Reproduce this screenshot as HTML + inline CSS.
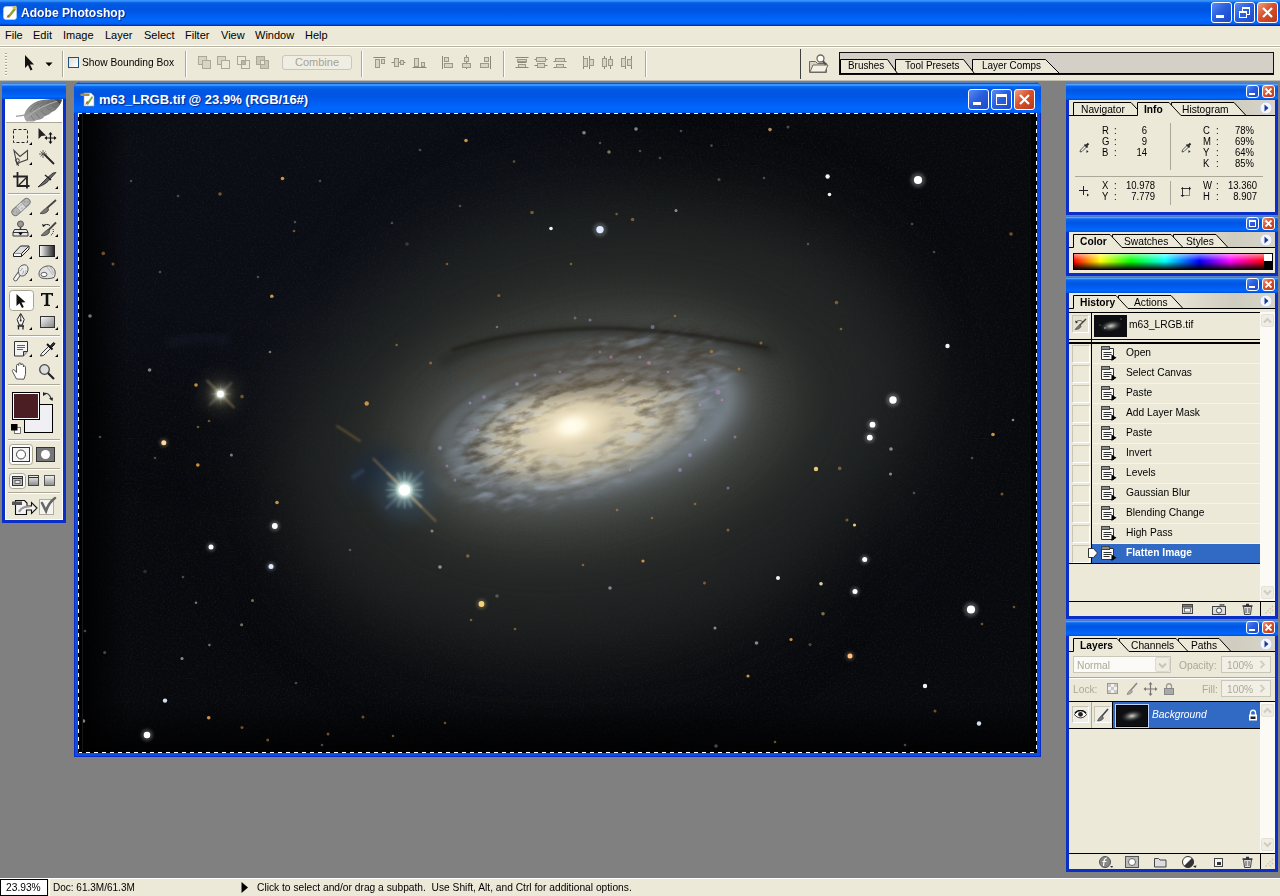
<!DOCTYPE html>
<html><head><meta charset="utf-8">
<style>
*{box-sizing:border-box;margin:0;padding:0}
html,body{width:1280px;height:896px;overflow:hidden;background:#808080;font-family:"Liberation Sans",sans-serif;font-size:11px;color:#000}
.abs{position:absolute}
#titlebar{left:0;top:0;width:1280px;height:26px;background:linear-gradient(#3c96ff 0%,#2f8afa 5%,#0a64e2 10%,#0057e2 18%,#0054e0 40%,#005ef2 58%,#0068ff 78%,#0062f4 91%,#0046d0 95%,#002fb0 98%)}
#titlebar .t{left:21px;top:5px;font-weight:bold;font-size:13px;color:#fff;text-shadow:1px 1px 1px #0a2a80;transform:scaleX(.93);transform-origin:0 50%;white-space:nowrap}
#menubar{left:0;top:26px;width:1280px;height:20px;background:#ece9d8;border-bottom:1px solid #fff}
#menubar span{position:absolute;top:3px;font-size:11px}
#optbar{left:0;top:46px;width:1280px;height:35px;background:#ece9d8;border-top:1px solid #b4b1a2;box-shadow:inset 0 1px 0 #fff;border-bottom:1px solid #c0bdae}
#statusbar{left:0;top:878px;width:1280px;height:18px;background:#ece9d8;border-top:1px solid #fff}
.xpwin{background:#0831d9;border-radius:5px 5px 0 0}
.xptitle{background:linear-gradient(#0a5fe0 0%,#3a8bf5 8%,#1169f2 18%,#0459e8 35%,#0355e2 60%,#0459ea 82%,#0b46c4 100%);border-radius:5px 5px 0 0}
.beige{background:#ece9d8}
.btn{position:absolute;border:1px solid #fff;border-radius:3px;background:linear-gradient(135deg,#5b8cf0 0%,#2a5fe0 45%,#1c48c8 100%)}
.btn.x{background:linear-gradient(135deg,#f0a080 0%,#d8502c 45%,#b83a18 100%)}
.vsep{top:4px;width:2px;height:26px;border-left:1px solid #aca899;border-right:1px solid #fff}
.wtab{top:12px;transform:scaleX(.9);transform-origin:0 50%;font-size:11px;white-space:nowrap}
.pt{font-size:11px;white-space:nowrap;transform:scaleX(.93);transform-origin:0 50%}
.pi{font-size:10px;white-space:nowrap;transform:scaleX(.95);transform-origin:0 50%}
.pi.r{text-align:right;transform-origin:100% 50%}
</style></head><body>
<!-- TITLE BAR -->
<div id="titlebar" class="abs">
<svg class="abs" style="left:3px;top:5px" width="15" height="15" viewBox="0 0 15 15"><rect x=".5" y="1.500" width="13" height="13" rx="2.500" fill="#fff" stroke="#c8d4f0" stroke-width=".6"/><path d="M4 12l7-9 2 1.500-7 8.500z" fill="#8aa030"/><path d="M3.500 13l1.500-3.500 1.500 1.200z" fill="#c05020"/><path d="M9 2.500l4-2 1 2.500-3 1.500z" fill="#e8c030"/></svg>
<div class="abs t">Adobe Photoshop</div>
<div class="btn" style="left:1211px;top:2px;width:21px;height:21px"><div class="abs" style="left:4px;top:12px;width:8px;height:3px;background:#fff"></div></div>
<div class="btn" style="left:1234px;top:2px;width:21px;height:21px"><div class="abs" style="left:7px;top:4px;width:8px;height:8px;border:1px solid #fff;border-top-width:2px"></div><div class="abs" style="left:4px;top:8px;width:8px;height:7px;border:1px solid #fff;border-top-width:2px;background:#2a5fe0"></div></div>
<div class="btn x" style="left:1257px;top:2px;width:21px;height:21px"><svg class="abs" style="left:3px;top:3px" width="13" height="13"><path d="M2 2l9 9M11 2l-9 9" stroke="#fff" stroke-width="2.200"/></svg></div>
</div>
<!-- MENU -->
<div id="menubar" class="abs">
<span style="left:5px">File</span><span style="left:33px">Edit</span><span style="left:63px">Image</span><span style="left:105px">Layer</span><span style="left:144px">Select</span><span style="left:185px">Filter</span><span style="left:221px">View</span><span style="left:255px">Window</span><span style="left:305px">Help</span>
</div>
<div id="optbar" class="abs">
<!-- gripper -->
<div class="abs" style="left:5px;top:6px;width:2px;height:24px;background:repeating-linear-gradient(#a8a593 0 1px,#fff 1px 2px,transparent 2px 3px)"></div>
<svg class="abs" style="left:22px;top:7px" width="14" height="18" viewBox="0 0 14 18"><path d="M3 1 L3 14 L6 11 L8.5 16.5 L10.5 15.5 L8 10.5 L12 10.5 Z" fill="#111"/></svg>
<svg class="abs" style="left:45px;top:15px" width="8" height="5"><path d="M0.5 0.5h7l-3.5 3.7z" fill="#000"/></svg>
<div class="abs vsep" style="left:62px"></div>
<div class="abs" style="left:68px;top:10px;width:11px;height:11px;border:1px solid #1c5180;background:linear-gradient(135deg,#dcdcd7,#fff)"></div>
<div class="abs pt" style="left:82px;top:9px" id="sbb">Show Bounding Box</div>
<div class="abs vsep" style="left:185px"></div>
<!-- 4 shape-area icons -->
<svg class="abs" style="left:197px;top:8px" width="74" height="16" viewBox="0 0 74 16" fill="none" stroke="#aca899">
<g><rect x="1.5" y="1.5" width="8" height="8" fill="#d8d5c6"/><rect x="5.5" y="5.5" width="8" height="8" fill="#d8d5c6"/></g>
<g transform="translate(19,0)"><rect x="1.5" y="1.5" width="8" height="8" fill="#d8d5c6"/><rect x="5.5" y="5.5" width="8" height="8" fill="#ece9d8"/></g>
<g transform="translate(39,0)"><rect x="1.5" y="1.5" width="8" height="8"/><rect x="5.5" y="5.5" width="8" height="8"/><rect x="5.5" y="5.5" width="4" height="4" fill="#b8b5a6"/></g>
<g transform="translate(58,0)"><rect x="1.5" y="1.5" width="8" height="8" fill="#c9c6b7"/><rect x="5.5" y="5.5" width="8" height="8" fill="#c9c6b7"/><rect x="5.5" y="5.5" width="4" height="4" fill="#ece9d8"/></g>
</svg>
<div class="abs" style="left:282px;top:8px;width:70px;height:15px;border:1px solid #c9c7ba;border-radius:3px;background:#f0eee2;color:#a5a294;font-size:11px;text-align:center;line-height:13px">Combine</div>
<div class="abs vsep" style="left:361px"></div>
<!-- align icons -->
<svg class="abs" style="left:372px;top:7px" width="270" height="18" viewBox="0 0 270 18" fill="#d8d5c6" stroke="#9c998a">
<g id="al1"><path d="M1.5 3.5h12" stroke="#8a8778"/><rect x="3.5" y="5.5" width="4" height="8"/><rect x="9.500" y="5.500" width="3" height="4"/></g>
<g transform="translate(19,0)"><path d="M0.5 8.500h14" stroke="#8a8778"/><rect x="3.500" y="4.500" width="4" height="8"/><rect x="9.500" y="6.500" width="3" height="4"/></g>
<g transform="translate(39,0)"><path d="M1.5 13.500h14" stroke="#8a8778"/><rect x="3.500" y="4.500" width="4" height="8"/><rect x="10.500" y="8.500" width="3" height="4"/></g>
<g transform="translate(68,0)"><path d="M2.500 2v13" stroke="#8a8778"/><rect x="4.500" y="3.500" width="4" height="4"/><rect x="4.500" y="9.500" width="8" height="4"/></g>
<g transform="translate(87,0)"><path d="M7.500 1v14" stroke="#8a8778"/><rect x="5.500" y="3.500" width="4" height="4"/><rect x="3.500" y="9.500" width="8" height="4"/></g>
<g transform="translate(106,0)"><path d="M12.500 2v13" stroke="#8a8778"/><rect x="6.500" y="3.500" width="4" height="4"/><rect x="2.500" y="9.500" width="8" height="4"/></g>
<g transform="translate(142,0)"><path d="M1.500 3.500h13M3.500 8.500h9" stroke="#8a8778"/><rect x="3.500" y="5.500" width="9" height="2"/><rect x="4.500" y="10.500" width="7" height="3"/><path d="M1.500 13.500h13" stroke="#8a8778"/></g>
<g transform="translate(161,0)"><path d="M1.500 5.500h13M1.500 11.500h13" stroke="#8a8778"/><rect x="3.500" y="3.500" width="9" height="4"/><rect x="4.500" y="9.500" width="7" height="4"/></g>
<g transform="translate(180,0)"><path d="M1.500 7.500h13M1.500 13.500h13" stroke="#8a8778"/><rect x="3.500" y="4.500" width="9" height="3"/><rect x="4.500" y="10.500" width="7" height="3"/></g>
<g transform="translate(209,0)"><path d="M2.500 2v13M8.500 2v13" stroke="#8a8778"/><rect x="2.500" y="4.500" width="4" height="8"/><rect x="8.500" y="5.500" width="4" height="6"/></g>
<g transform="translate(228,0)"><path d="M4.500 2v13M10.500 2v13" stroke="#8a8778"/><rect x="2.500" y="4.500" width="4" height="8"/><rect x="8.500" y="5.500" width="4" height="6"/></g>
<g transform="translate(247,0)"><path d="M6.500 2v13M12.500 2v13" stroke="#8a8778"/><rect x="2.500" y="4.500" width="4" height="8"/><rect x="8.500" y="5.500" width="4" height="6"/></g>
</svg>
<div class="abs vsep" style="left:503px"></div>
<div class="abs vsep" style="left:645px"></div>
<div class="abs" style="left:800px;top:2px;width:1px;height:30px;background:#404040"></div>
<!-- file browser icon -->
<svg class="abs" style="left:807px;top:6px" width="23" height="22" viewBox="0 0 23 22"><path d="M2.500 8.500h6l2 2h9v9h-17z" fill="#d6d3c4" stroke="#6e6b5e"/><path d="M3 19l3-7h15l-3 7z" fill="#f4f2e8" stroke="#6e6b5e"/><circle cx="13.500" cy="5.500" r="3.500" fill="#fff" stroke="#6e6b5e" stroke-width="1.300"/><path d="M15.800 8l3 3.500" stroke="#55524a" stroke-width="2"/></svg>
<!-- palette well -->
<div class="abs" style="left:839px;top:5px;width:435px;height:23px;background:#d4d0c8;border:1px solid #111"></div>
<svg class="abs" style="left:839px;top:6px" width="436" height="21" viewBox="0 0 436 21">
<path d="M133.500 20.500V6.500h73l14 14z" fill="#ece9d8" stroke="#000"/>
<path d="M56.500 20.500V6.500h68l11 14z" fill="#ece9d8" stroke="#000"/>
<path d="M1.500 20.500V6.500h47l10 14z" fill="#ece9d8" stroke="#000"/>
<path d="M1 20.500h434" stroke="#000"/>
</svg>
<div class="abs wtab" style="left:848px">Brushes</div>
<div class="abs wtab" style="left:905px">Tool Presets</div>
<div class="abs wtab" style="left:982px">Layer Comps</div>
</div>
<div id="statusbar" class="abs">
<div class="abs" style="left:0;top:0;width:48px;height:17px;border:1px solid #000;background:#fff"></div><div class="abs pt" style="left:6px;top:2px">23.93%</div>
<div class="abs" style="left:49px;top:0;width:1px;height:17px;background:#fff"></div>
<div class="abs pt" style="left:53px;top:2px;transform:scaleX(.91)" id="doc">Doc: 61.3M/61.3M</div>
<svg class="abs" style="left:241px;top:3px" width="8" height="11"><path d="M0.500 0v11l6.500-5.500z" fill="#000"/></svg>
<div class="abs pt" style="left:257px;top:2px;white-space:pre" id="hint">Click to select and/or drag a subpath.  Use Shift, Alt, and Ctrl for additional options.</div>
</div>
<!-- TOOLBOX -->
<div id="toolbox" class="abs" style="left:2px;top:82px;width:64px;height:441px;background:#0a2fc8"></div>
<div class="abs" style="left:2px;top:82px;width:64px;height:17px;background:linear-gradient(#6486b8 0%,#4a78c4 10%,#5aa8ff 12%,#4a9cff 18%,#0a66f0 24%,#0056e2 45%,#005cf0 65%,#0068ff 86%,#0050d8 100%)"></div>
<div class="abs" style="left:5px;top:99px;width:58px;height:23px;background:#fff"></div>
<div class="abs" style="left:5px;top:122px;width:58px;height:398px;background:#ece9d8;border-left:1px solid #fff;border-right:1px solid #fff;border-bottom:1px solid #fff"></div>
<svg class="abs" style="left:2px;top:82px" width="64" height="441" viewBox="2 82 64 441">
<defs>
<linearGradient id="gH" x1="0" x2="1"><stop offset="0" stop-color="#fff"/><stop offset="1" stop-color="#222"/></linearGradient>
<linearGradient id="gV" x1="0" x2="0" y1="0" y2="1"><stop offset="0" stop-color="#f4f4f4"/><stop offset="1" stop-color="#8a8a8a"/></linearGradient>
<linearGradient id="gD" x1="0" x2="1" y1="0" y2="1"><stop offset="0" stop-color="#fafafa"/><stop offset="1" stop-color="#808080"/></linearGradient>
<filter id="tb1" x="-30%" y="-30%" width="160%" height="160%"><feGaussianBlur stdDeviation="0.500"/></filter>
</defs>
<!-- feather -->
<linearGradient id="fg" x1="0" y1="1" x2="1" y2="0"><stop offset="0" stop-color="#a4a4a4"/><stop offset=".6" stop-color="#858585"/><stop offset="1" stop-color="#5c5c5c"/></linearGradient>
<g filter="url(#tb1)"><path d="M16 116.300C19 116 22 115.800 25 114.800" stroke="#9a9a9a" stroke-width="1.300" fill="none"/>
<path d="M24 116C25 110 30 104 38 101C46 99 56 98.500 62 99.500C61.500 103 59 107 55 110.500L51.500 112.200C50 114 47 115.500 44.500 116.300L43 118C41 119.500 38.500 120 36.500 120L35 121C32.500 121.700 30.500 121.700 29 121.200L27.500 121.700C25.500 121 24.500 119 24 116z" fill="url(#fg)"/>
<path d="M26 117.500C34 111 46 104 60 100.500" stroke="#b8b8b8" stroke-width=".9" fill="none"/>
<path d="M30 112c2-4 5-7 9-9M34 110c3-4 6-6 10-8M40 107c3-3 6-4 9-5M46 104c3-2 5-2.500 8-3M31 116l3 4M36 113.500l4 5M41 111l5 4M47 108l5 3M52 105.500l4 2.500" stroke="#666" stroke-width=".8" fill="none" opacity=".8"/>
<path d="M54.500 99l7.500 .5-2 4.500z" fill="#4a4a4a"/></g>
<path d="M6 122.500h56" stroke="#aca899"/>
<!-- separators -->
<g stroke="#aca899"><path d="M8 193.500h52M8 286.500h52M8 335.500h52M8 384.500h52M8 439.500h52M8 468.500h52M8 492.500h52"/></g>
<g stroke="#fff"><path d="M8 194.500h52M8 287.500h52M8 336.500h52M8 385.500h52M8 440.500h52M8 469.500h52M8 493.500h52"/></g>
<!-- flyout triangles -->
<g fill="#000"><path d="M32 142v3h-3zM32 162v3h-3zM58 186v3h-3zM32 212v3h-3zM58 212v3h-3zM32 234v3h-3zM58 234v3h-3zM32 256v3h-3zM58 256v3h-3zM32 278v3h-3zM58 278v3h-3zM32 307v3h-3zM58 305v3h-3zM32 327v3h-3zM58 327v3h-3zM32 354v3h-3zM58 354v3h-3z"/></g>
<!-- marquee -->
<rect x="13.500" y="129.500" width="14" height="13" fill="none" stroke="#222" stroke-dasharray="3 2"/>
<!-- move -->
<path d="M38.500 128v11l3-3 4.500-.5z" fill="#222"/><path d="M50.500 133v10M45.500 138h10" stroke="#111" stroke-width="1.200"/><path d="M50.500 132l2 2.500h-4zM50.500 144l2-2.500h-4zM44.500 138l2.500-2v4zM56.500 138l-2.500-2v4z" fill="#111"/>
<!-- polygon lasso -->
<path d="M14 150.500l6 6 7.500-6v9l-8 3-2.500 2z" fill="none" stroke="#444" stroke-width="1.100"/><circle cx="17.500" cy="160.500" r="1.800" fill="none" stroke="#333"/><path d="M17 162l1.500 4" stroke="#333"/>
<!-- magic wand -->
<path d="M44 154l10 10" stroke="#222" stroke-width="1.800"/><path d="M43 150v8M39 154h8M40.500 151.500l5 5M45.500 151.500l-5 5" stroke="#555" stroke-width=".9"/>
<!-- crop -->
<path d="M17.500 172v14h12M13 176.500h14v12" fill="none" stroke="#222" stroke-width="1.800"/><path d="M18 186l9-9" stroke="#222" stroke-width="1.200"/>
<!-- slice -->
<path d="M38 187c6-2 10-5 12-8l6-6.500-3 .5-6 5c-3 3-6 6-9 9z" fill="#666" stroke="#222" stroke-width=".8"/><path d="M45 175l6 5" stroke="#222" stroke-width="1.500"/>
<!-- healing brush -->
<g transform="rotate(-42 21 207)"><rect x="10" y="203.500" width="22" height="7" rx="3.500" fill="#b5b5b5" stroke="#777"/><rect x="17.500" y="203.500" width="7" height="7" fill="#d8d8d8" stroke="#888" stroke-width=".6"/><g fill="#777"><circle cx="12.500" cy="205.500" r=".5"/><circle cx="14.500" cy="208" r=".5"/><circle cx="27.500" cy="205.500" r=".5"/><circle cx="29.500" cy="208" r=".5"/><circle cx="19.500" cy="205.500" r=".5"/><circle cx="22.500" cy="205.500" r=".5"/><circle cx="21" cy="208.500" r=".5"/></g></g>
<!-- brush -->
<path d="M56 200l-9 8" stroke="#444" stroke-width="1.800"/><path d="M47 207.500c-2 1-4 3-7 6 3 .5 6 0 8-2.500 1-1.500 .5-3-1-3.500z" fill="#777" stroke="#333" stroke-width=".7"/>
<!-- stamp -->
<circle cx="20.500" cy="224" r="3" fill="#9a9a9a" stroke="#555"/><path d="M20.500 227v3" stroke="#444" stroke-width="1.500"/><path d="M14.500 229.500h12l1.500 3v3.500h-15v-3.500z" fill="#e8e8e8" stroke="#333"/><path d="M13 232.500h15" stroke="#333"/><path d="M18 232.500h5l-2.500 3z" fill="#111"/>
<!-- history brush -->
<path d="M56 222.500l-8 8" stroke="#444" stroke-width="1.800"/><path d="M48 229.500c-2 1-4 3-7 6 3 .5 6 0 8-2.500 1-1.500 .5-3-1-3.500z" fill="#777" stroke="#333" stroke-width=".7"/><path d="M43 226c2-2 5-2 7-.5" fill="none" stroke="#222"/><path d="M42 224l1 3 2.500-1.500z" fill="#111"/><path d="M53 229c1 2.500 0 5-2.500 6.500" fill="none" stroke="#222" stroke-dasharray="1 1"/>
<!-- eraser -->
<path d="M13.500 253.500l7-7.500h8.500l-7.500 7.500z" fill="#ddd" stroke="#222"/><path d="M13.500 253.500v3h8v-3M21.500 256.500l7.500-7.500v-3" fill="#f8f8f8" stroke="#222"/>
<!-- gradient -->
<rect x="39.500" y="245.500" width="15" height="11" fill="url(#gH)" stroke="#222"/>
<!-- smudge -->
<path d="M15.500 279L20.500 272" stroke="#555" stroke-width="4.600" stroke-linecap="round"/><path d="M15.500 279L20.500 272" stroke="#f6f6f6" stroke-width="2.800" stroke-linecap="round"/>
<path d="M18.500 271.500c-.5-3 1.500-5.500 4.500-6.500 2.500-.8 4.800 .5 5 3 .3 3-1 6-3.500 7.500-2 1-4.500 .5-5.500-1z" fill="#ececec" stroke="#555"/>
<path d="M22 274.500c1-1 1.500-2.300 1.500-3.800M24.500 274.500c1-1.500 1.500-2.800 1.500-4.200M20 271c1-.5 2-1.800 2.500-3" stroke="#8a8a8a" stroke-width=".8" fill="none"/>
<!-- sponge -->
<path d="M39 274c0-4 3-7 8-8 4-.5 7 1.500 8 5 .5 3 0 5-1 6.500-4 1.500-9 1.500-12.500.5-1.500-.5-2.500-2-2.500-4z" fill="#e0e0e0" stroke="#555"/><ellipse cx="44" cy="274.500" rx="3" ry="2.200" fill="#f8f8f8" stroke="#555" stroke-width=".9"/><path d="M47 267l6 8M50 266.500l4 7" stroke="#aaa" stroke-width=".8"/>
<!-- selected path-select tool -->
<rect x="9.500" y="290.500" width="24" height="20" rx="3" fill="#fff" stroke="#a8a593"/><path d="M16.500 294v12l3-2.800 2.500 4.800 1.800-1-2.300-4.500 4-.3z" fill="#111"/>
<!-- T -->
<path d="M41 293h12v3h-1l-.7-1.500h-3v10l1.700.5v1h-6v-1l1.700-.5v-10h-3l-.7 1.500h-1z" fill="#111"/>
<!-- pen -->
<path d="M20.700 313.500l-3.500 6 2 5.500h3l2-5.500z" fill="#f4f4f4" stroke="#222"/><path d="M20.700 314v6" stroke="#222" stroke-width=".8"/><circle cx="20.700" cy="320.500" r=".9" fill="#222"/><path d="M17.500 326h6.500M18.500 326v3.500M23 326v3.500" stroke="#222" stroke-width="1.300"/>
<!-- rect shape -->
<rect x="40.500" y="316.500" width="14" height="11" fill="url(#gD)" stroke="#333"/>
<!-- notes -->
<path d="M14.500 341.500h13v10l-4 4.500h-9z" fill="#f4f4f4" stroke="#333"/><path d="M23.500 356v-4.500h4" fill="#bbb" stroke="#333"/><path d="M17 345.500h8M17 347.500h8M17 349.500h6" stroke="#555" stroke-width=".9"/>
<!-- eyedropper -->
<path d="M40.500 356l1-2.500 7-7 2 2-7 7z" fill="#f0f0f0" stroke="#222" stroke-width=".9"/><path d="M47 344l5.500 5.500" stroke="#111" stroke-width="2"/><path d="M50 346.500l3-3.500c1-1 2.500 .5 1.500 1.500l-3 3z" fill="#333" stroke="#111"/>
<!-- hand -->
<path d="M16.500 379l-4-7.500c-.8-1.500 1-2.500 2-1.500l2 2.500v-7c0-1.500 2-1.500 2.200 0v-1.500c0-1.500 2.200-1.500 2.300 0v1c0-1.500 2.300-1.500 2.400 0v2c0-1.300 2.100-1.300 2.100 .2v7l-1.500 5z" fill="#fff" stroke="#444" stroke-width=".9"/>
<!-- zoom -->
<circle cx="44.500" cy="369.500" r="4.800" fill="#ddd" stroke="#444" stroke-width="1.300"/><path d="M48 373l6 6" stroke="#222" stroke-width="2.200"/>
<!-- colors -->
<rect x="24.500" y="404.500" width="28" height="28" fill="#f0f0f4" stroke="#000"/>
<rect x="12.500" y="392.500" width="27" height="27" fill="#fff" stroke="#000"/><rect x="14" y="394" width="24" height="24" fill="#4a1e22"/>
<path d="M44 393.500c3-1 6 1 7 5" fill="none" stroke="#333" stroke-width="1.200"/><path d="M43 392l0 4 3.500-2zM52.500 401l-3.500-2.500 4-1z" fill="#222"/>
<rect x="14.500" y="427.500" width="6" height="6" fill="#fff" stroke="#555" stroke-width=".8"/><rect x="11" y="424" width="6.500" height="6.500" fill="#000"/>
<!-- quick mask -->
<rect x="9.500" y="444.500" width="23" height="20" rx="3" fill="#fff" stroke="#a8a593"/><rect x="12.500" y="447.500" width="17" height="14" fill="#f4f4f4" stroke="#333"/><circle cx="21" cy="454.500" r="4.500" fill="#fff" stroke="#444"/>
<rect x="36.500" y="447.500" width="18" height="14" fill="#777" stroke="#333"/><circle cx="45.500" cy="454.500" r="4.500" fill="#fff"/>
<!-- screen modes -->
<rect x="9.500" y="473.500" width="16" height="15" rx="3" fill="#f8f8f4" stroke="#a8a593"/><rect x="12.500" y="476.500" width="10" height="9" fill="#b8b8b8" stroke="#333"/><path d="M12.500 478.500h10" stroke="#333"/><rect x="15" y="480.500" width="5" height="3" fill="#e8e8e8" stroke="#444" stroke-width=".7"/>
<rect x="28.500" y="475.500" width="10" height="10" fill="url(#gV)" stroke="#444"/><path d="M28.500 477.500h10" stroke="#333"/>
<rect x="44.500" y="475.500" width="10" height="10" fill="url(#gV)" stroke="#555"/>
<!-- jump to -->
<path d="M15.500 500.500h9l2.500 2.500v3h4.500v-3.500l5.500 5.500-5.500 5.500v-3.500h-5v4.500h-11z" fill="#f4f4f4" stroke="#111" stroke-width="1.100"/><rect x="12" y="501.500" width="10" height="3.500" fill="#555"/><path d="M19 512c2-4 6-6 11-5.500" fill="none" stroke="#999" stroke-width="2"/>
<rect x="39.500" y="499.500" width="14" height="15" fill="#f4f4f0" stroke="#b0ada0"/><path d="M42 503l4 8c2-6 5-10 9-13" fill="none" stroke="#666" stroke-width="2.600" stroke-linecap="round"/>
</svg>

<!-- DOC WINDOW -->
<div id="docwin" class="abs" style="left:74px;top:82px;width:967px;height:675px;background:#0a4ce4;border-radius:7px 7px 0 0;overflow:hidden;box-shadow:inset 0 0 0 1px #0a2cc4">
<div class="abs" style="left:0;top:0;width:967px;height:31px;background:linear-gradient(#5a7cb8 0%,#5a7cb8 3%,#1a50b8 3.500%,#1a50b8 6%,#3c92ff 7%,#3c92ff 11.500%,#0a6cf0 14%,#0058e4 24%,#0054e0 42%,#005cf0 62%,#0068ff 86%,#0064f8 96%,#0050d8 100%)"></div>
<!-- doc icon -->
<svg class="abs" style="left:6px;top:9px" width="16" height="16" viewBox="0 0 16 16"><path d="M4 2h7l3 3v10H4z" fill="#fff" stroke="#a0a0a0" stroke-width=".6"/><path d="M0.500 2.500h9v2.500h-9z" fill="#a09048"/><path d="M6 13l6-8 1 1.500-5 7.500z" fill="#78b040"/><path d="M5 14l2-4 1.500 1z" fill="#d04020"/></svg>
<div class="abs" style="left:25px;top:10px;font-size:13px;font-weight:bold;color:#fff;white-space:nowrap;text-shadow:1px 1px 1px #0a2a80" id="doctitle">m63_LRGB.tif @ 23.9% (RGB/16#)</div>
<div class="btn" style="left:894px;top:7px;width:21px;height:21px"><div class="abs" style="left:4px;top:12px;width:8px;height:3px;background:#fff"></div></div>
<div class="btn" style="left:917px;top:7px;width:21px;height:21px"><div class="abs" style="left:4px;top:4px;width:11px;height:11px;border:1px solid #fff;border-top-width:3px"></div></div>
<div class="btn x" style="left:940px;top:7px;width:21px;height:21px"><svg class="abs" style="left:3px;top:3px" width="13" height="13"><path d="M2 2l9 9M11 2l-9 9" stroke="#fff" stroke-width="2.200"/></svg></div>
</div>
<svg class="abs" id="gal" style="left:78px;top:113px" width="959" height="640" viewBox="78 113 959 640">
<defs>
<filter id="b1" color-interpolation-filters="sRGB" x="-50%" y="-50%" width="200%" height="200%"><feGaussianBlur stdDeviation="0.6"/></filter>
<filter id="bs" color-interpolation-filters="sRGB" x="-50%" y="-50%" width="200%" height="200%"><feGaussianBlur stdDeviation="0.9"/></filter>
<filter id="b2" color-interpolation-filters="sRGB" x="-50%" y="-50%" width="200%" height="200%"><feGaussianBlur stdDeviation="1.5"/></filter>
<filter id="b4" color-interpolation-filters="sRGB" x="-50%" y="-50%" width="200%" height="200%"><feGaussianBlur stdDeviation="4"/></filter>
<filter id="b8" color-interpolation-filters="sRGB" x="-50%" y="-50%" width="200%" height="200%"><feGaussianBlur stdDeviation="9"/></filter>
<filter id="b20" color-interpolation-filters="sRGB" x="-50%" y="-50%" width="200%" height="200%"><feGaussianBlur stdDeviation="20"/></filter>
<filter id="b40" color-interpolation-filters="sRGB" x="-50%" y="-50%" width="200%" height="200%"><feGaussianBlur stdDeviation="45"/></filter>
<radialGradient id="core"><stop offset="0" stop-color="#fffbe8"/><stop offset=".2" stop-color="#fff4d8" stop-opacity=".95"/><stop offset=".55" stop-color="#f2e4c0" stop-opacity=".55"/><stop offset="1" stop-color="#e6d8b4" stop-opacity="0"/></radialGradient>
<filter id="mott" x="0" y="0" width="100%" height="100%" color-interpolation-filters="sRGB"><feTurbulence type="fractalNoise" baseFrequency="0.05 0.13" numOctaves="4" seed="11"/><feColorMatrix type="matrix" values="0 0 0 0 0.22  0 0 0 0 0.18  0 0 0 0 0.13  2.4 0 0 0 -1.05"/></filter>
<filter id="mottL" x="0" y="0" width="100%" height="100%" color-interpolation-filters="sRGB"><feTurbulence type="fractalNoise" baseFrequency="0.05 0.13" numOctaves="2" seed="29"/><feColorMatrix type="matrix" values="0 0 0 0 0.72  0 0 0 0 0.78  0 0 0 0 0.88  0 2.4 0 0 -1.15"/></filter>
<filter id="grain" x="0" y="0" width="100%" height="100%" color-interpolation-filters="sRGB"><feTurbulence type="fractalNoise" baseFrequency="0.6" numOctaves="2" seed="4"/><feColorMatrix type="matrix" values="0 0 0 0 0.16  0 0 0 0 0.17  0 0 0 0 0.19  0.9 0.5 0 0 -0.68"/></filter>
<mask id="dm"><g transform="rotate(-13 580 425)"><ellipse cx="592" cy="424" rx="150" ry="66" fill="#fff" filter="url(#b8)"/><ellipse cx="574" cy="427" rx="46" ry="24" fill="#000" filter="url(#b8)"/></g></mask>
<mask id="dmT"><g transform="rotate(-13 580 425)"><ellipse cx="596" cy="404" rx="150" ry="52" fill="#fff" filter="url(#b8)"/><ellipse cx="574" cy="430" rx="60" ry="30" fill="#000" filter="url(#b8)"/></g></mask>
<mask id="dm2"><g transform="rotate(-10 580 425)"><ellipse cx="592" cy="418" rx="175" ry="86" fill="#fff" filter="url(#b8)"/><ellipse cx="580" cy="430" rx="95" ry="42" fill="#000" filter="url(#b8)"/></g></mask>
<linearGradient id="vl" x1="0" x2="1"><stop offset="0" stop-color="#000" stop-opacity=".9"/><stop offset="1" stop-color="#000" stop-opacity="0"/></linearGradient><linearGradient id="vb" x1="0" x2="0" y1="1" y2="0"><stop offset="0" stop-color="#000" stop-opacity=".85"/><stop offset="1" stop-color="#000" stop-opacity="0"/></linearGradient>
<clipPath id="cp"><rect x="83" y="113" width="948" height="638"/></clipPath>
</defs>
<rect x="78" y="113" width="959" height="640" fill="#000"/>
<rect x="82" y="113" width="1" height="638" fill="#14161a"/>
<rect x="1029" y="113" width="1" height="638" fill="#1a1c14"/>
<g clip-path="url(#cp)">
<rect x="83" y="113" width="948" height="638" fill="#08090d"/>
<ellipse cx="300" cy="220" rx="330" ry="190" fill="#0b0d15" filter="url(#b40)"/>
<ellipse cx="640" cy="330" rx="230" ry="120" fill="#1c1f1c" filter="url(#b40)"/>
<ellipse cx="560" cy="540" rx="230" ry="110" fill="#1a1c1b" filter="url(#b40)"/>
<g transform="rotate(-10 580 425)">
<ellipse cx="600" cy="428" rx="330" ry="200" fill="#242726" filter="url(#b40)"/>
<ellipse cx="590" cy="424" rx="215" ry="128" fill="#393c37" filter="url(#b20)"/>
</g>
<rect x="83" y="113" width="948" height="638" filter="url(#grain)" opacity=".9"/>
<g transform="rotate(-13 580 425)">
<ellipse cx="590" cy="425" rx="166" ry="84" fill="#585c5c" filter="url(#b20)"/>
<ellipse cx="594" cy="427" rx="148" ry="64" fill="#747c82" filter="url(#b8)"/>
<ellipse cx="594" cy="427" rx="150" ry="66" fill="#6a7278" opacity=".5" filter="url(#b20)"/>
<ellipse cx="584" cy="428" rx="112" ry="50" fill="#a9a696" filter="url(#b8)"/>
<ellipse cx="578" cy="428" rx="84" ry="40" fill="#d2c8ac" filter="url(#b8)"/>
</g>
<g transform="rotate(-13 580 425)"><rect x="400" y="320" width="380" height="210" filter="url(#mottL)" mask="url(#dm)" opacity=".5"/></g>
<g transform="rotate(-13 580 425)"><rect x="400" y="320" width="380" height="210" filter="url(#mott)" mask="url(#dm)" opacity=".28"/></g>
<g transform="rotate(-13 580 425)"><rect x="400" y="320" width="380" height="210" filter="url(#mott)" mask="url(#dmT)" opacity=".5"/></g>
<ellipse cx="600" cy="372" rx="120" ry="22" fill="#4a3e30" opacity=".45" filter="url(#b8)" transform="rotate(-4 600 372)"/>
<path d="M440 364 C480 338 560 326 630 329 C690 332 740 341 775 352" fill="none" stroke="#1e1b17" stroke-width="8" opacity=".5" filter="url(#b4)"/>
<path d="M452 350 C505 332 585 325 645 330 C695 334 735 341 768 348" fill="none" stroke="#17140f" stroke-width="2.5" opacity=".7" filter="url(#b2)"/>
<path d="M456 380 C495 354 570 344 640 349 C690 353 722 362 748 374" fill="none" stroke="#4a4034" stroke-width="4" opacity=".5" filter="url(#b2)"/>
<path d="M479.2 439.9 L481.8 432.1 L487.1 424.0 L495.0 416.1 L505.3 408.4 L517.5 401.2 L531.5 394.9 L546.6 389.4 L562.6 385.1 L578.8 382.0 L594.8 380.2 L610.1 379.9 L624.3 380.9 L636.8 383.3 L647.4 387.0" fill="none" stroke="#3a3428" stroke-width="3" opacity="0.22" filter="url(#b2)"/>
<path d="M453.2 433.8 L460.5 422.7 L471.5 411.7 L485.7 401.2 L502.7 391.5 L522.0 383.0 L542.9 375.8 L564.7 370.3 L586.8 366.5 L608.4 364.8 L628.9 365.0 L647.4 367.2 L663.5 371.3 L676.7 377.2 L686.4 384.7" fill="none" stroke="#3a3428" stroke-width="3" opacity="0.22" filter="url(#b2)"/>
<path d="M425.1 453.8 L427.7 439.2 L436.3 423.9 L450.7 408.8 L470.2 394.4 L494.0 381.3 L521.1 370.1 L550.3 361.3 L580.5 355.2 L610.3 352.0 L638.4 352.0 L663.8 355.1 L685.3 361.2 L702.0 370.1 L713.3 381.3" fill="none" stroke="#3a3428" stroke-width="3.5" opacity="0.2" filter="url(#b2)"/>
<path d="M674.6 410.5 L671.4 419.8 L664.7 429.2 L654.8 438.6 L642.0 447.5 L626.8 455.6 L609.7 462.7 L591.2 468.6 L572.1 473.0 L553.0 475.7 L534.5 476.7 L517.4 475.9 L502.1 473.4 L489.3 469.2 L479.4 463.5" fill="none" stroke="#3a3428" stroke-width="3" opacity="0.15" filter="url(#b2)"/>
<path d="M703.1 417.5 L694.7 430.2 L682.0 442.7 L665.5 454.6 L645.8 465.6 L623.4 475.2 L599.3 483.0 L574.2 488.9 L549.0 492.6 L524.6 493.9 L501.9 492.9 L481.7 489.6 L464.5 484.0 L451.2 476.4 L442.0 467.1" fill="none" stroke="#3a3428" stroke-width="3" opacity="0.15" filter="url(#b2)"/>
<path d="M465.6 437.5 L470.4 427.9 L478.5 418.2 L489.7 408.8 L503.5 399.9 L519.6 391.9 L537.4 385.0 L556.3 379.4 L575.7 375.3 L595.0 372.9 L613.6 372.2 L630.8 373.3 L646.1 376.1 L658.9 380.5 L668.9 386.4" fill="none" stroke="#b8c4d0" stroke-width="5" opacity="0.16" filter="url(#b4)"/>
<path d="M437.2 446.1 L441.5 433.2 L450.7 420.1 L464.5 407.3 L482.2 395.1 L503.3 384.0 L526.9 374.6 L552.2 367.0 L578.2 361.6 L604.1 358.7 L628.7 358.2 L651.2 360.3 L670.8 364.8 L686.7 371.6 L698.3 380.4" fill="none" stroke="#a8b8cc" stroke-width="5" opacity="0.15" filter="url(#b4)"/>
<path d="M688.9 399.0 L688.9 410.7 L683.6 423.0 L673.3 435.5 L658.5 447.6 L639.8 458.7 L618.1 468.3 L594.3 476.1 L569.5 481.6 L544.8 484.6 L521.4 485.0 L500.2 482.7 L482.2 477.9 L468.3 470.8 L459.0 461.7" fill="none" stroke="#b0bccc" stroke-width="5" opacity="0.15" filter="url(#b4)"/>
<path d="M719.1 410.6 L712.3 424.8 L700.5 439.0 L684.3 452.7 L664.1 465.6 L640.8 477.0 L615.0 486.7 L587.7 494.2 L559.9 499.4 L532.5 502.0 L506.5 501.9 L482.8 499.3 L462.2 494.0 L445.4 486.4 L433.0 476.7" fill="none" stroke="#9fb0c6" stroke-width="5" opacity="0.16" filter="url(#b4)"/>
<path d="M713.0 368.2 L717.7 372.4 L721.6 376.8 L724.7 381.6 L726.9 386.6 L728.3 391.8 L728.7 397.2 L728.3 402.7 L727.1 408.4 L724.9 414.2 L721.9 420.1 L718.1 426.0 L713.5 431.9 L708.0 437.7 L701.8 443.5" fill="none" stroke="#a8b8d0" stroke-width="6" opacity="0.2" filter="url(#b4)"/>
<circle cx="652.6" cy="327" r="2" fill="#a8b8e0" opacity=".45" filter="url(#b1)"/>
<circle cx="611" cy="357" r="1.8" fill="#d890b0" opacity=".45" filter="url(#b1)"/>
<circle cx="649" cy="363" r="2" fill="#d890b0" opacity=".45" filter="url(#b1)"/>
<circle cx="517" cy="384" r="2" fill="#a8b8e0" opacity=".45" filter="url(#b1)"/>
<circle cx="484" cy="397" r="2" fill="#c890c8" opacity=".45" filter="url(#b1)"/>
<circle cx="470" cy="403" r="1.5" fill="#b0a8e8" opacity=".45" filter="url(#b1)"/>
<circle cx="440" cy="448" r="2" fill="#c0a0e0" opacity=".45" filter="url(#b1)"/>
<circle cx="447" cy="466" r="1.5" fill="#c890c8" opacity=".45" filter="url(#b1)"/>
<circle cx="455" cy="480" r="1.5" fill="#c0a0e0" opacity=".45" filter="url(#b1)"/>
<circle cx="718" cy="392" r="2.5" fill="#c890c8" opacity=".45" filter="url(#b1)"/>
<circle cx="722" cy="400" r="1.5" fill="#d890b0" opacity=".45" filter="url(#b1)"/>
<circle cx="690" cy="455" r="2" fill="#b0a8e8" opacity=".45" filter="url(#b1)"/>
<circle cx="680" cy="470" r="2" fill="#c0a0e0" opacity=".45" filter="url(#b1)"/>
<circle cx="640" cy="357" r="1.5" fill="#b0a8e8" opacity=".45" filter="url(#b1)"/>
<circle cx="590" cy="320" r="1.5" fill="#a8b8e0" opacity=".45" filter="url(#b1)"/>
<circle cx="575" cy="318" r="1.5" fill="#c890c8" opacity=".45" filter="url(#b1)"/>
<circle cx="497" cy="327" r="1.3" fill="#a8b8e0" opacity=".45" filter="url(#b1)"/>
<circle cx="735" cy="437" r="1.5" fill="#c0a0e0" opacity=".45" filter="url(#b1)"/>
<circle cx="505" cy="470" r="1.5" fill="#c890c8" opacity=".45" filter="url(#b1)"/>
<circle cx="700" cy="405" r="1.5" fill="#c0a0e0" opacity=".45" filter="url(#b1)"/>
<circle cx="535" cy="375" r="1.5" fill="#b0a8e8" opacity=".45" filter="url(#b1)"/>
<circle cx="600" cy="352" r="1.3" fill="#d890b0" opacity=".45" filter="url(#b1)"/>
<circle cx="668" cy="372" r="1.3" fill="#c0a0e0" opacity=".45" filter="url(#b1)"/>
<circle cx="728" cy="488" r="1.5" fill="#b0a8e8" opacity=".45" filter="url(#b1)"/>
<circle cx="478" cy="430" r="1.3" fill="#c0a0e0" opacity=".45" filter="url(#b1)"/>
<circle cx="560" cy="372" r="1.3" fill="#c890c8" opacity=".45" filter="url(#b1)"/>
<circle cx="623" cy="380" r="1.2" fill="#c0a0e0" opacity=".45" filter="url(#b1)"/>
<circle cx="660" cy="395" r="1.2" fill="#a8b8e0" opacity=".45" filter="url(#b1)"/>
<circle cx="520" cy="440" r="1.2" fill="#a8b8e0" opacity=".45" filter="url(#b1)"/>
<circle cx="545" cy="462" r="1.2" fill="#b0a8e8" opacity=".45" filter="url(#b1)"/>
<circle cx="630" cy="470" r="1.2" fill="#c0a0e0" opacity=".45" filter="url(#b1)"/>
<circle cx="705" cy="440" r="1.3" fill="#c0a0e0" opacity=".45" filter="url(#b1)"/>
<g transform="rotate(-13 572 426)"><ellipse cx="572" cy="426" rx="58" ry="30" fill="url(#core)"/><ellipse cx="572" cy="426" rx="11" ry="7" fill="#fffdf0" filter="url(#b4)"/></g>
<path d="M168 345 C185 336 210 336 232 340" fill="none" stroke="#262c40" stroke-width="6" opacity=".55" filter="url(#b4)" stroke-dasharray="9 4"/>
<ellipse cx="372" cy="470" rx="30" ry="16" fill="#1e2a3a" opacity=".8" filter="url(#b8)" transform="rotate(-35 372 470)"/>
<path d="M352 478 l12 -8" stroke="#3c5070" stroke-width="4" opacity=".5" filter="url(#b2)"/>
<rect x="83" y="113" width="45" height="638" fill="url(#vl)"/>
<rect x="83" y="700" width="948" height="51" fill="url(#vb)"/>
<circle cx="466" cy="140.5" r="1.8" fill="#d89848" opacity=".95" filter="url(#b1)"/>
<circle cx="282.5" cy="178.5" r="1.8" fill="#d89848" opacity=".95" filter="url(#b1)"/>
<circle cx="220" cy="194" r="1.8" fill="#d89848" opacity=".5" filter="url(#b1)"/>
<circle cx="514" cy="161.5" r="1.3" fill="#8fa878" opacity=".5" filter="url(#b1)"/>
<circle cx="532" cy="212.5" r="1.8" fill="#d89848" opacity=".5" filter="url(#b1)"/>
<circle cx="551" cy="228.5" r="1.8" fill="#ffffff" opacity=".95" filter="url(#b1)"/>
<circle cx="271.8" cy="296.3" r="1.8" fill="#d89848" opacity=".95" filter="url(#b1)"/>
<circle cx="103.3" cy="253.4" r="1.8" fill="#d89848" opacity=".5" filter="url(#b1)"/>
<circle cx="113" cy="264" r="1.5" fill="#d89848" opacity=".5" filter="url(#b1)"/>
<circle cx="90" cy="316" r="1.8" fill="#dfeaff" opacity=".5" filter="url(#b1)"/>
<circle cx="498.8" cy="295.5" r="1.5" fill="#d89848" opacity=".5" filter="url(#b1)"/>
<circle cx="149.6" cy="370" r="1.8" fill="#8a8a88" opacity=".95" filter="url(#b1)"/>
<circle cx="196" cy="385" r="1.8" fill="#d89848" opacity=".95" filter="url(#b1)"/>
<circle cx="242" cy="396.6" r="1.8" fill="#d89848" opacity=".5" filter="url(#b1)"/>
<circle cx="366.7" cy="403.5" r="2.2" fill="#d89848" opacity=".95" filter="url(#b1)"/>
<circle cx="270" cy="352" r="1.3" fill="#e8d8b8" opacity=".5" filter="url(#b1)"/>
<circle cx="430.6" cy="363" r="1.5" fill="#d89848" opacity=".5" filter="url(#b1)"/>
<circle cx="396.6" cy="345" r="1.3" fill="#d89848" opacity=".5" filter="url(#b1)"/>
<circle cx="407" cy="244" r="1.8" fill="#3a3c44" opacity=".95" filter="url(#b1)"/>
<circle cx="131" cy="181" r="1.3" fill="#8a8a88" opacity=".5" filter="url(#b1)"/>
<circle cx="178" cy="196" r="1.3" fill="#8a8a88" opacity=".5" filter="url(#b1)"/>
<circle cx="295" cy="222" r="1.3" fill="#8a8a88" opacity=".5" filter="url(#b1)"/>
<circle cx="320" cy="181" r="1.3" fill="#8a8a88" opacity=".5" filter="url(#b1)"/>
<circle cx="258" cy="277" r="1.3" fill="#8a8a88" opacity=".5" filter="url(#b1)"/>
<circle cx="160" cy="272" r="1.3" fill="#8a8a88" opacity=".5" filter="url(#b1)"/>
<circle cx="350" cy="118" r="1.3" fill="#556" opacity=".5" filter="url(#b1)"/>
<circle cx="420" cy="150" r="1.3" fill="#8a8a88" opacity=".5" filter="url(#b1)"/>
<circle cx="447" cy="264" r="1.3" fill="#d89848" opacity=".5" filter="url(#b1)"/>
<circle cx="460" cy="206" r="1.3" fill="#8a8a88" opacity=".5" filter="url(#b1)"/>
<circle cx="392" cy="223" r="1.3" fill="#8a8a88" opacity=".5" filter="url(#b1)"/>
<circle cx="294" cy="231" r="1.3" fill="#d89848" opacity=".5" filter="url(#b1)"/>
<circle cx="584" cy="132.7" r="1.8" fill="#8a8a88" opacity=".95" filter="url(#b1)"/>
<circle cx="636" cy="129" r="1.8" fill="#8a8a88" opacity=".95" filter="url(#b1)"/>
<circle cx="609" cy="152" r="1.8" fill="#e8d8b8" opacity=".5" filter="url(#b1)"/>
<circle cx="770" cy="129.6" r="1.8" fill="#c09060" opacity=".95" filter="url(#b1)"/>
<circle cx="788" cy="127" r="1.5" fill="#8a8a88" opacity=".5" filter="url(#b1)"/>
<circle cx="711.5" cy="145.6" r="1.3" fill="#8090c0" opacity=".5" filter="url(#b1)"/>
<circle cx="719" cy="179.6" r="1.5" fill="#8a8a88" opacity=".5" filter="url(#b1)"/>
<circle cx="827.6" cy="176.5" r="2.2" fill="#ffffff" opacity=".95" filter="url(#b1)"/>
<circle cx="829.5" cy="194.5" r="1.8" fill="#ffffff" opacity=".95" filter="url(#b1)"/>
<circle cx="918" cy="180" r="7.5" fill="#ffffff" opacity=".22" filter="url(#b2)"/>
<circle cx="918" cy="180" r="4.1" fill="#ffffff" filter="url(#b1)"/>
<circle cx="600" cy="229.6" r="6.8" fill="#dfeaff" opacity=".22" filter="url(#b2)"/>
<circle cx="600" cy="229.6" r="3.7" fill="#dfeaff" filter="url(#b1)"/>
<circle cx="632.6" cy="219.5" r="1.8" fill="#d89848" opacity=".5" filter="url(#b1)"/>
<circle cx="676" cy="210.5" r="1.5" fill="#ffffff" opacity=".5" filter="url(#b1)"/>
<circle cx="616.6" cy="214" r="1.3" fill="#d89848" opacity=".5" filter="url(#b1)"/>
<circle cx="1011" cy="234" r="1.8" fill="#d89848" opacity=".5" filter="url(#b1)"/>
<circle cx="836.5" cy="302.6" r="1.8" fill="#d89848" opacity=".5" filter="url(#b1)"/>
<circle cx="841" cy="329" r="1.3" fill="#d89848" opacity=".5" filter="url(#b1)"/>
<circle cx="947.5" cy="346" r="2.2" fill="#ffffff" opacity=".95" filter="url(#b1)"/>
<circle cx="893" cy="400" r="6.8" fill="#ffffff" opacity=".22" filter="url(#b2)"/>
<circle cx="893" cy="400" r="3.7" fill="#ffffff" filter="url(#b1)"/>
<circle cx="711.5" cy="351.5" r="1.8" fill="#d89848" opacity=".5" filter="url(#b1)"/>
<circle cx="761" cy="343" r="1.5" fill="#d89848" opacity=".5" filter="url(#b1)"/>
<circle cx="739" cy="369" r="1.5" fill="#d89848" opacity=".5" filter="url(#b1)"/>
<circle cx="675" cy="316" r="1.3" fill="#d89848" opacity=".5" filter="url(#b1)"/>
<circle cx="600" cy="143" r="1.3" fill="#8a8a88" opacity=".5" filter="url(#b1)"/>
<circle cx="640" cy="151" r="1.3" fill="#8a8a88" opacity=".5" filter="url(#b1)"/>
<circle cx="660" cy="158" r="1.3" fill="#8a8a88" opacity=".5" filter="url(#b1)"/>
<circle cx="681" cy="131" r="1.3" fill="#8a8a88" opacity=".5" filter="url(#b1)"/>
<circle cx="764" cy="178" r="1.3" fill="#8a8a88" opacity=".5" filter="url(#b1)"/>
<circle cx="808" cy="244" r="1.3" fill="#8a8a88" opacity=".5" filter="url(#b1)"/>
<circle cx="912" cy="224" r="1.3" fill="#8a8a88" opacity=".5" filter="url(#b1)"/>
<circle cx="934" cy="252" r="1.3" fill="#8a8a88" opacity=".5" filter="url(#b1)"/>
<circle cx="571" cy="264" r="1.3" fill="#d89848" opacity=".5" filter="url(#b1)"/>
<circle cx="872.5" cy="424.7" r="5.2" fill="#ffffff" opacity=".22" filter="url(#b2)"/>
<circle cx="872.5" cy="424.7" r="2.9" fill="#ffffff" filter="url(#b1)"/>
<circle cx="869.8" cy="437.6" r="5.2" fill="#ffffff" opacity=".22" filter="url(#b2)"/>
<circle cx="869.8" cy="437.6" r="2.9" fill="#ffffff" filter="url(#b1)"/>
<circle cx="891" cy="449" r="1.8" fill="#ffffff" opacity=".5" filter="url(#b1)"/>
<circle cx="890.5" cy="474" r="1.5" fill="#ffffff" opacity=".5" filter="url(#b1)"/>
<circle cx="993" cy="434.5" r="1.8" fill="#d89848" opacity=".95" filter="url(#b1)"/>
<circle cx="1013" cy="420" r="1.3" fill="#ffffff" opacity=".5" filter="url(#b1)"/>
<circle cx="816" cy="469" r="2.2" fill="#f6d27a" opacity=".95" filter="url(#b1)"/>
<circle cx="839.7" cy="468.4" r="1.8" fill="#d89848" opacity=".5" filter="url(#b1)"/>
<circle cx="854.5" cy="525" r="1.6" fill="#f6d27a" opacity=".95" filter="url(#b1)"/>
<circle cx="847" cy="520" r="1.5" fill="#d89848" opacity=".5" filter="url(#b1)"/>
<circle cx="864.7" cy="559.5" r="4.5" fill="#ffffff" opacity=".22" filter="url(#b2)"/>
<circle cx="864.7" cy="559.5" r="2.5" fill="#ffffff" filter="url(#b1)"/>
<circle cx="855" cy="591.5" r="4.5" fill="#ffffff" opacity=".22" filter="url(#b2)"/>
<circle cx="855" cy="591.5" r="2.5" fill="#ffffff" filter="url(#b1)"/>
<circle cx="778" cy="578" r="2.0" fill="#ffffff" opacity=".95" filter="url(#b1)"/>
<circle cx="821" cy="583.7" r="1.8" fill="#e8d8b8" opacity=".95" filter="url(#b1)"/>
<circle cx="971" cy="609.5" r="7.5" fill="#ffffff" opacity=".22" filter="url(#b2)"/>
<circle cx="971" cy="609.5" r="4.1" fill="#ffffff" filter="url(#b1)"/>
<circle cx="823" cy="613.7" r="1.8" fill="#f6d27a" opacity=".5" filter="url(#b1)"/>
<circle cx="850" cy="656" r="4.5" fill="#ffc080" opacity=".22" filter="url(#b2)"/>
<circle cx="850" cy="656" r="2.5" fill="#ffc080" filter="url(#b1)"/>
<circle cx="925" cy="686" r="2.2" fill="#ffffff" opacity=".95" filter="url(#b1)"/>
<circle cx="979" cy="723.5" r="2.2" fill="#dfeaff" opacity=".95" filter="url(#b1)"/>
<circle cx="748" cy="676" r="1.6" fill="#d89848" opacity=".95" filter="url(#b1)"/>
<circle cx="791" cy="639.5" r="1.6" fill="#d89848" opacity=".95" filter="url(#b1)"/>
<circle cx="810" cy="644.6" r="1.6" fill="#a08050" opacity=".5" filter="url(#b1)"/>
<circle cx="756.5" cy="643" r="1.8" fill="#ffffff" opacity=".5" filter="url(#b1)"/>
<circle cx="715" cy="628" r="1.5" fill="#ffffff" opacity=".5" filter="url(#b1)"/>
<circle cx="643" cy="561" r="1.6" fill="#d89848" opacity=".95" filter="url(#b1)"/>
<circle cx="610" cy="588" r="1.8" fill="#dfeaff" opacity=".5" filter="url(#b1)"/>
<circle cx="728" cy="530" r="1.5" fill="#d89848" opacity=".5" filter="url(#b1)"/>
<circle cx="704.5" cy="583" r="1.5" fill="#d89848" opacity=".5" filter="url(#b1)"/>
<circle cx="583" cy="565" r="1.3" fill="#d89848" opacity=".5" filter="url(#b1)"/>
<circle cx="935" cy="711" r="1.5" fill="#d89848" opacity=".5" filter="url(#b1)"/>
<circle cx="716" cy="746" r="1.8" fill="#8a8a88" opacity=".5" filter="url(#b1)"/>
<circle cx="1002" cy="494" r="1.5" fill="#d89848" opacity=".5" filter="url(#b1)"/>
<circle cx="914" cy="493" r="1.3" fill="#8a8a88" opacity=".5" filter="url(#b1)"/>
<circle cx="972" cy="458" r="1.3" fill="#8a8a88" opacity=".5" filter="url(#b1)"/>
<circle cx="695" cy="504" r="1.3" fill="#d89848" opacity=".5" filter="url(#b1)"/>
<circle cx="652" cy="518" r="1.3" fill="#d89848" opacity=".5" filter="url(#b1)"/>
<circle cx="617" cy="510" r="1.3" fill="#d89848" opacity=".5" filter="url(#b1)"/>
<circle cx="775" cy="742" r="1.3" fill="#d89848" opacity=".5" filter="url(#b1)"/>
<circle cx="905" cy="745" r="1.3" fill="#8a8a88" opacity=".5" filter="url(#b1)"/>
<circle cx="1014" cy="607" r="1.3" fill="#d89848" opacity=".5" filter="url(#b1)"/>
<circle cx="982" cy="624" r="1.3" fill="#d89848" opacity=".5" filter="url(#b1)"/>
<circle cx="163.8" cy="442.7" r="4.5" fill="#ffd9a0" opacity=".22" filter="url(#b2)"/>
<circle cx="163.8" cy="442.7" r="2.5" fill="#ffd9a0" filter="url(#b1)"/>
<circle cx="197.8" cy="465" r="1.8" fill="#d89848" opacity=".95" filter="url(#b1)"/>
<circle cx="231.4" cy="455" r="1.5" fill="#dfeaff" opacity=".5" filter="url(#b1)"/>
<circle cx="277" cy="502.5" r="1.8" fill="#d89848" opacity=".95" filter="url(#b1)"/>
<circle cx="274.8" cy="526" r="5.2" fill="#ffffff" opacity=".22" filter="url(#b2)"/>
<circle cx="274.8" cy="526" r="2.9" fill="#ffffff" filter="url(#b1)"/>
<circle cx="211" cy="547" r="4.5" fill="#ffffff" opacity=".22" filter="url(#b2)"/>
<circle cx="211" cy="547" r="2.5" fill="#ffffff" filter="url(#b1)"/>
<circle cx="271" cy="566.5" r="4.5" fill="#dfeaff" opacity=".22" filter="url(#b2)"/>
<circle cx="271" cy="566.5" r="2.5" fill="#dfeaff" filter="url(#b1)"/>
<circle cx="481.5" cy="604" r="5.2" fill="#f6d27a" opacity=".22" filter="url(#b2)"/>
<circle cx="481.5" cy="604" r="2.9" fill="#f6d27a" filter="url(#b1)"/>
<circle cx="467.8" cy="556" r="1.8" fill="#d89848" opacity=".5" filter="url(#b1)"/>
<circle cx="440" cy="567" r="1.8" fill="#ffffff" opacity=".5" filter="url(#b1)"/>
<circle cx="432" cy="531" r="1.5" fill="#e8d8b8" opacity=".5" filter="url(#b1)"/>
<circle cx="350" cy="550" r="1.3" fill="#8090b0" opacity=".5" filter="url(#b1)"/>
<circle cx="165" cy="700.6" r="2.2" fill="#dfeaff" opacity=".95" filter="url(#b1)"/>
<circle cx="147" cy="735" r="6.0" fill="#ffffff" opacity=".22" filter="url(#b2)"/>
<circle cx="147" cy="735" r="3.3" fill="#ffffff" filter="url(#b1)"/>
<circle cx="208.7" cy="717.8" r="1.8" fill="#d89848" opacity=".95" filter="url(#b1)"/>
<circle cx="252.5" cy="600.5" r="1.5" fill="#f6d27a" opacity=".5" filter="url(#b1)"/>
<circle cx="242" cy="727.5" r="1.5" fill="#d89848" opacity=".5" filter="url(#b1)"/>
<circle cx="267.7" cy="740" r="1.5" fill="#d89848" opacity=".5" filter="url(#b1)"/>
<circle cx="363" cy="717" r="1.5" fill="#d89848" opacity=".5" filter="url(#b1)"/>
<circle cx="328" cy="734" r="1.5" fill="#d89848" opacity=".5" filter="url(#b1)"/>
<circle cx="81.7" cy="474.7" r="1.3" fill="#d89848" opacity=".5" filter="url(#b1)"/>
<circle cx="83.5" cy="721" r="1.8" fill="#ffffff" opacity=".5" filter="url(#b1)"/>
<circle cx="497" cy="596" r="1.8" fill="#8a8a88" opacity=".5" filter="url(#b1)"/>
<circle cx="145" cy="571.6" r="1.8" fill="#2e3038" opacity=".95" filter="url(#b1)"/>
<circle cx="209" cy="421" r="1.3" fill="#d89848" opacity=".5" filter="url(#b1)"/>
<circle cx="198" cy="427" r="1.3" fill="#d89848" opacity=".5" filter="url(#b1)"/>
<circle cx="100" cy="437" r="1.3" fill="#8a8a88" opacity=".5" filter="url(#b1)"/>
<circle cx="155" cy="458" r="1.3" fill="#8a8a88" opacity=".5" filter="url(#b1)"/>
<circle cx="241.6" cy="624.7" r="1.5" fill="#e8d8b8" opacity=".5" filter="url(#b1)"/>
<circle cx="182" cy="658.5" r="1.6" fill="#ffffff" opacity=".5" filter="url(#b1)"/>
<circle cx="209.4" cy="645" r="1.3" fill="#e8d8b8" opacity=".5" filter="url(#b1)"/>
<circle cx="196" cy="602.7" r="1.3" fill="#e8d8b8" opacity=".5" filter="url(#b1)"/>
<circle cx="183" cy="577" r="1.3" fill="#8a8a88" opacity=".5" filter="url(#b1)"/>
<circle cx="104.7" cy="652.5" r="1.5" fill="#8a8a88" opacity=".5" filter="url(#b1)"/>
<circle cx="85" cy="631" r="1.3" fill="#8a8a88" opacity=".5" filter="url(#b1)"/>
<circle cx="296" cy="683" r="1.3" fill="#8a8a88" opacity=".5" filter="url(#b1)"/>
<circle cx="393" cy="736" r="1.3" fill="#d89848" opacity=".5" filter="url(#b1)"/>
<circle cx="445" cy="723" r="1.3" fill="#d89848" opacity=".5" filter="url(#b1)"/>
<circle cx="322" cy="745" r="1.3" fill="#8a8a88" opacity=".5" filter="url(#b1)"/>
<circle cx="515" cy="629" r="1.3" fill="#d89848" opacity=".5" filter="url(#b1)"/>
<circle cx="471" cy="620" r="1.3" fill="#d89848" opacity=".5" filter="url(#b1)"/>
<circle cx="404.5" cy="490" r="29.400000000000002" fill="#34506a" opacity=".5" filter="url(#b8)"/>
<path d="M373.4 458.9L435.6 521.1" stroke="#c8a060" stroke-width="1.7" opacity="0.5" stroke-linecap="round" filter="url(#bs)"/>
<path d="M387.5 473.0L421.5 507.0" stroke="#e0c090" stroke-width="1.7" opacity="0.5" stroke-linecap="round" filter="url(#bs)"/>
<path d="M386.1 508.4L422.9 471.6" stroke="#7890b8" stroke-width="1.7" opacity="0.45" stroke-linecap="round" filter="url(#bs)"/>
<path d="M404.2 472.0L404.8 508.0" stroke="#b0d8d0" stroke-width="1.6" opacity="0.4" stroke-linecap="round" filter="url(#bs)"/>
<path d="M386.5 489.7L422.5 490.3" stroke="#b0d8d0" stroke-width="1.6" opacity="0.4" stroke-linecap="round" filter="url(#bs)"/>
<path d="M397.8 473.3L411.2 506.7" stroke="#b0d8d0" stroke-width="1.6" opacity="0.4" stroke-linecap="round" filter="url(#bs)"/>
<path d="M411.2 473.3L397.8 506.7" stroke="#b0d8d0" stroke-width="1.6" opacity="0.4" stroke-linecap="round" filter="url(#bs)"/>
<path d="M387.8 483.3L421.2 496.7" stroke="#b0d8d0" stroke-width="1.6" opacity="0.4" stroke-linecap="round" filter="url(#bs)"/>
<path d="M421.2 483.3L387.8 496.7" stroke="#b0d8d0" stroke-width="1.6" opacity="0.4" stroke-linecap="round" filter="url(#bs)"/>
<circle cx="404.5" cy="490" r="13.299999999999999" fill="#bfe4dc" opacity=".55" filter="url(#b4)"/>
<circle cx="404.5" cy="490" r="8.049999999999999" fill="#e8fff4" opacity=".8" filter="url(#b2)"/>
<circle cx="404.5" cy="490" r="5.6000000000000005" fill="#fff" filter="url(#b1)"/>
<path d="M337 426 L360 441" stroke="#9a7a40" stroke-width="2" opacity=".55" stroke-linecap="round" filter="url(#bs)"/>
<circle cx="220.5" cy="394" r="17.64" fill="#4a4a3a" opacity=".5" filter="url(#b8)"/>
<path d="M207.1 380.6L233.9 407.4" stroke="#c0a070" stroke-width="2" opacity="0.5" stroke-linecap="round" filter="url(#bs)"/>
<path d="M209.2 405.3L231.8 382.7" stroke="#a0a090" stroke-width="1.8" opacity="0.4" stroke-linecap="round" filter="url(#bs)"/>
<path d="M220.3 385.0L220.7 403.0" stroke="#b0b0a0" stroke-width="1.4" opacity="0.35" stroke-linecap="round" filter="url(#bs)"/>
<path d="M211.5 393.8L229.5 394.2" stroke="#b0b0a0" stroke-width="1.4" opacity="0.35" stroke-linecap="round" filter="url(#bs)"/>
<circle cx="220.5" cy="394" r="7.9799999999999995" fill="#e8e4c0" opacity=".55" filter="url(#b4)"/>
<circle cx="220.5" cy="394" r="4.83" fill="#e8fff4" opacity=".8" filter="url(#b2)"/>
<circle cx="220.5" cy="394" r="3.3600000000000003" fill="#fff" filter="url(#b1)"/>
</g></svg>
<!-- marching ants -->
<div class="abs" style="left:78px;top:113px;width:959px;height:1px;background:repeating-linear-gradient(90deg,#fff 0 4px,#000 4px 8px)"></div>
<div class="abs" style="left:78px;top:752px;width:959px;height:1px;background:repeating-linear-gradient(90deg,#fff 0 4px,#000 4px 8px)"></div>
<div class="abs" style="left:78px;top:113px;width:1px;height:640px;background:repeating-linear-gradient(#fff 0 4px,#000 4px 8px)"></div>
<div class="abs" style="left:1036px;top:113px;width:1px;height:640px;background:repeating-linear-gradient(#fff 0 4px,#000 4px 8px)"></div>

<!-- PALETTES -->
<div class="abs" style="left:1066px;top:82px;width:212px;height:133px;background:#0a2fc8"></div>
<div class="abs" style="left:1066px;top:82px;width:212px;height:18px;background:linear-gradient(#6486b8 0%,#4a78c4 10%,#5aa8ff 12%,#4a9cff 17%,#0a66f0 22%,#0056e2 45%,#005cf0 65%,#0068ff 86%,#0050d8 100%)"></div>
<div class="abs" style="left:1069px;top:100px;width:206px;height:112px;background:#ece9d8"></div>
<div class="abs" style="left:1069px;top:100px;width:206px;height:16px;background:linear-gradient(90deg,#ece9d8 0%,#e4e1d2 55%,#cfccc0 80%,#d8d5c8 100%)"></div>
<div class="btn" style="left:1246px;top:85px;width:13px;height:13px;border-radius:3px"><div class="abs" style="left:2px;top:7px;width:6px;height:2px;background:#fff"></div></div>
<div class="btn x" style="left:1262px;top:85px;width:13px;height:13px;border-radius:3px"><svg class="abs" style="left:1px;top:1px" width="9" height="9"><path d="M1.500 1.500l6 6M7.500 1.500l-6 6" stroke="#fff" stroke-width="1.800"/></svg></div>
<svg class="abs" style="left:1259px;top:101px" width="14" height="14"><circle cx="7" cy="7" r="6" fill="#f4f6fc" stroke="#c8d0e8"/><path d="M5.500 3.500v7l4-3.500z" fill="#1a3a9a"/></svg>
<svg class="abs" style="left:1066px;top:100px" width="212" height="17" viewBox="1066 100 212 17"><path d="M1171.5 115.5 L1171.5 102.5 L1234 102.5 L1246 115.5z" fill="#ece9d8" stroke="none"/><path d="M1171.5 115.5 L1171.5 102.5 L1234 102.5 L1246 115.5" fill="none" stroke="#000"/><path d="M1073.5 115.5 L1073.5 102.5 L1131 102.5 L1143 115.5z" fill="#ece9d8" stroke="none"/><path d="M1073.5 115.5 L1073.5 102.5 L1131 102.5 L1143 115.5" fill="none" stroke="#000"/><path d="M1137.5 115.5 L1137.5 102.5 L1169 102.5 L1181 115.5  L1181 117.0 L1137.5 117.0z" fill="#ece9d8" stroke="none"/><path d="M1137.5 115.5 L1137.5 102.5 L1169 102.5 L1181 115.5 " fill="none" stroke="#000"/><path d="M1069 115.5H1137.5M1181 115.5H1275" stroke="#000"/></svg>
<div class="abs pt" style="left:1081px;top:103px;font-weight:normal">Navigator</div>
<div class="abs pt" style="left:1144px;top:103px;font-weight:bold">Info</div>
<div class="abs pt" style="left:1182px;top:103px;font-weight:normal">Histogram</div>
<div class="abs pi" style="left:1102px;top:125px">R</div>
<div class="abs pi" style="left:1114px;top:125px">:</div>
<div class="abs pi r" style="left:1087px;width:60px;top:125px">6</div>
<div class="abs pi" style="left:1102px;top:136px">G</div>
<div class="abs pi" style="left:1114px;top:136px">:</div>
<div class="abs pi r" style="left:1087px;width:60px;top:136px">9</div>
<div class="abs pi" style="left:1102px;top:147px">B</div>
<div class="abs pi" style="left:1114px;top:147px">:</div>
<div class="abs pi r" style="left:1087px;width:60px;top:147px">14</div>
<div class="abs pi" style="left:1203px;top:125px">C</div>
<div class="abs pi" style="left:1216px;top:125px">:</div>
<div class="abs pi r" style="left:1194px;width:60px;top:125px">78%</div>
<div class="abs pi" style="left:1203px;top:136px">M</div>
<div class="abs pi" style="left:1216px;top:136px">:</div>
<div class="abs pi r" style="left:1194px;width:60px;top:136px">69%</div>
<div class="abs pi" style="left:1203px;top:147px">Y</div>
<div class="abs pi" style="left:1216px;top:147px">:</div>
<div class="abs pi r" style="left:1194px;width:60px;top:147px">64%</div>
<div class="abs pi" style="left:1203px;top:158px">K</div>
<div class="abs pi" style="left:1216px;top:158px">:</div>
<div class="abs pi r" style="left:1194px;width:60px;top:158px">85%</div>
<div class="abs pi" style="left:1102px;top:180px">X</div>
<div class="abs pi" style="left:1114px;top:180px">:</div>
<div class="abs pi r" style="left:1095px;width:60px;top:180px">10.978</div>
<div class="abs pi" style="left:1102px;top:191px">Y</div>
<div class="abs pi" style="left:1114px;top:191px">:</div>
<div class="abs pi r" style="left:1095px;width:60px;top:191px">7.779</div>
<div class="abs pi" style="left:1203px;top:180px">W</div>
<div class="abs pi" style="left:1216px;top:180px">:</div>
<div class="abs pi r" style="left:1197px;width:60px;top:180px">13.360</div>
<div class="abs pi" style="left:1203px;top:191px">H</div>
<div class="abs pi" style="left:1216px;top:191px">:</div>
<div class="abs pi r" style="left:1197px;width:60px;top:191px">8.907</div>
<div class="abs" style="left:1170px;top:123px;width:1px;height:47px;background:#aca899"></div>
<div class="abs" style="left:1170px;top:181px;width:1px;height:24px;background:#aca899"></div>
<div class="abs" style="left:1075px;top:176px;width:188px;height:1px;background:#aca899"></div>
<svg class="abs" style="left:1079px;top:142px" width="11" height="12"><path d="M1 10l.5-2 5-5 1.500 1.500-5 5z" fill="#eee" stroke="#333" stroke-width=".8"/><path d="M5.500 2.500l3 3" stroke="#222" stroke-width="1.600"/><path d="M7.500 3.500l2-2" stroke="#222" stroke-width="2"/><path d="M7.500 8v3l2-1.500z" fill="#222"/></svg>
<svg class="abs" style="left:1181px;top:142px" width="11" height="12"><path d="M1 10l.5-2 5-5 1.500 1.500-5 5z" fill="#eee" stroke="#333" stroke-width=".8"/><path d="M5.500 2.500l3 3" stroke="#222" stroke-width="1.600"/><path d="M7.500 3.500l2-2" stroke="#222" stroke-width="2"/><path d="M7.500 8v3l2-1.500z" fill="#222"/></svg>
<svg class="abs" style="left:1079px;top:186px" width="12" height="12"><path d="M4.500 0v9M0 4.500h9" stroke="#222"/><path d="M8 7.500v3l2-1.500z" fill="#222"/></svg>
<svg class="abs" style="left:1180px;top:186px" width="12" height="12"><rect x="2.500" y="2.500" width="7" height="7" fill="none" stroke="#222" stroke-dasharray="1 1"/><path d="M2.500 1v9M1 2.500h9" stroke="#222" stroke-width=".8"/><path d="M9 .5l2 2-2 2zM.5 9l2 2 2-2z" fill="#222"/></svg>
<div class="abs" style="left:1066px;top:215px;width:212px;height:61px;background:#0a2fc8"></div>
<div class="abs" style="left:1066px;top:215px;width:212px;height:17px;background:linear-gradient(#6486b8 0%,#4a78c4 10%,#5aa8ff 12%,#4a9cff 17%,#0a66f0 22%,#0056e2 45%,#005cf0 65%,#0068ff 86%,#0050d8 100%)"></div>
<div class="abs" style="left:1069px;top:232px;width:206px;height:41px;background:#ece9d8"></div>
<div class="abs" style="left:1069px;top:232px;width:206px;height:16px;background:linear-gradient(90deg,#ece9d8 0%,#e4e1d2 55%,#cfccc0 80%,#d8d5c8 100%)"></div>
<div class="btn" style="left:1246px;top:217px;width:13px;height:13px;border-radius:3px"><div class="abs" style="left:2px;top:2px;width:7px;height:7px;border:1px solid #fff;border-top-width:2px"></div></div>
<div class="btn x" style="left:1262px;top:217px;width:13px;height:13px;border-radius:3px"><svg class="abs" style="left:1px;top:1px" width="9" height="9"><path d="M1.500 1.500l6 6M7.500 1.500l-6 6" stroke="#fff" stroke-width="1.800"/></svg></div>
<svg class="abs" style="left:1259px;top:233px" width="14" height="14"><circle cx="7" cy="7" r="6" fill="#f4f6fc" stroke="#c8d0e8"/><path d="M5.500 3.500v7l4-3.500z" fill="#1a3a9a"/></svg>
<svg class="abs" style="left:1066px;top:232px" width="212" height="17" viewBox="1066 232 212 17"><path d="M1173.5 247.5 L1173.5 234.5 L1216 234.5 L1228 247.5z" fill="#ece9d8" stroke="none"/><path d="M1173.5 247.5 L1173.5 234.5 L1216 234.5 L1228 247.5" fill="none" stroke="#000"/><path d="M1112.5 247.5 L1112.5 234.5 L1171 234.5 L1183 247.5z" fill="#ece9d8" stroke="none"/><path d="M1112.5 247.5 L1112.5 234.5 L1171 234.5 L1183 247.5" fill="none" stroke="#000"/><path d="M1073.5 247.5 L1073.5 234.5 L1110 234.5 L1122 247.5  L1122 249.0 L1073.5 249.0z" fill="#ece9d8" stroke="none"/><path d="M1073.5 247.5 L1073.5 234.5 L1110 234.5 L1122 247.5 " fill="none" stroke="#000"/><path d="M1069 247.5H1073.5M1122 247.5H1275" stroke="#000"/></svg>
<div class="abs pt" style="left:1080px;top:235px;font-weight:bold">Color</div>
<div class="abs pt" style="left:1124px;top:235px;font-weight:normal">Swatches</div>
<div class="abs pt" style="left:1186px;top:235px;font-weight:normal">Styles</div>
<div class="abs" style="left:1073px;top:253px;width:200px;height:17px;background:#000"></div>
<div class="abs" style="left:1074px;top:254px;width:190px;height:15px;background:linear-gradient(rgba(255,255,255,.55) 0%,rgba(255,255,255,0) 45%,rgba(0,0,0,0) 50%,rgba(0,0,0,.9) 100%),linear-gradient(90deg,#f00 0%,#ff0 14%,#0f0 30%,#0ff 48%,#00f 66%,#f0f 82%,#f00 100%)"></div>
<div class="abs" style="left:1264px;top:254px;width:8px;height:7px;background:#fff"></div>
<div class="abs" style="left:1066px;top:276px;width:212px;height:343px;background:#0a2fc8"></div>
<div class="abs" style="left:1066px;top:276px;width:212px;height:17px;background:linear-gradient(#6486b8 0%,#4a78c4 10%,#5aa8ff 12%,#4a9cff 17%,#0a66f0 22%,#0056e2 45%,#005cf0 65%,#0068ff 86%,#0050d8 100%)"></div>
<div class="abs" style="left:1069px;top:293px;width:206px;height:323px;background:#ece9d8"></div>
<div class="abs" style="left:1069px;top:293px;width:206px;height:16px;background:linear-gradient(90deg,#ece9d8 0%,#e4e1d2 55%,#cfccc0 80%,#d8d5c8 100%)"></div>
<div class="btn" style="left:1246px;top:278px;width:13px;height:13px;border-radius:3px"><div class="abs" style="left:2px;top:7px;width:6px;height:2px;background:#fff"></div></div>
<div class="btn x" style="left:1262px;top:278px;width:13px;height:13px;border-radius:3px"><svg class="abs" style="left:1px;top:1px" width="9" height="9"><path d="M1.500 1.500l6 6M7.500 1.500l-6 6" stroke="#fff" stroke-width="1.800"/></svg></div>
<svg class="abs" style="left:1259px;top:294px" width="14" height="14"><circle cx="7" cy="7" r="6" fill="#f4f6fc" stroke="#c8d0e8"/><path d="M5.500 3.500v7l4-3.500z" fill="#1a3a9a"/></svg>
<svg class="abs" style="left:1066px;top:293px" width="212" height="17" viewBox="1066 293 212 17"><path d="M1118.5 308.5 L1118.5 295.5 L1171 295.5 L1183 308.5z" fill="#ece9d8" stroke="none"/><path d="M1118.5 308.5 L1118.5 295.5 L1171 295.5 L1183 308.5" fill="none" stroke="#000"/><path d="M1073.5 308.5 L1073.5 295.5 L1116 295.5 L1128 308.5  L1128 310.0 L1073.5 310.0z" fill="#ece9d8" stroke="none"/><path d="M1073.5 308.5 L1073.5 295.5 L1116 295.5 L1128 308.5 " fill="none" stroke="#000"/><path d="M1069 308.5H1073.5M1128 308.5H1275" stroke="#000"/></svg>
<div class="abs pt" style="left:1080px;top:296px;font-weight:bold">History</div>
<div class="abs pt" style="left:1134px;top:296px;font-weight:normal">Actions</div>
<div class="abs" style="left:1069px;top:312px;width:206px;height:1px;background:#000"></div>
<div class="abs" style="left:1091px;top:312px;width:1px;height:252px;background:#000"></div>
<div class="abs" style="left:1072px;top:315px;width:17px;height:18px;border:1px solid #c8c5b4;border-right-color:#fff;border-bottom-color:#fff;background:#e4e1d0"></div>
<svg class="abs" style="left:1074px;top:318px" width="14" height="13"><path d="M12 1l-6 6" stroke="#444" stroke-width="1.500"/><path d="M6 6.500c-2 1-3 3-5 5 3 0 5-1 6-3z" fill="#777" stroke="#333" stroke-width=".6"/><path d="M2 4c2-2 5-2 7 0" fill="none" stroke="#333" stroke-width=".8"/><path d="M1 2.500l1 3 2-1.500z" fill="#222"/></svg>
<svg class="abs" style="left:1094px;top:315px" width="33" height="22" viewBox="0 0 33 22"><defs><radialGradient id="thg"><stop offset="0" stop-color="#d8d0b8"/><stop offset=".35" stop-color="#6a6c6c"/><stop offset="1" stop-color="#101216" stop-opacity="0"/></radialGradient></defs><rect width="33" height="22" fill="#0c0e12"/><ellipse cx="17" cy="11" rx="12" ry="6" fill="url(#thg)" transform="rotate(-10 17 11)"/><circle cx="11" cy="13" r=".8" fill="#ccc"/><circle cx="6" cy="10" r=".6" fill="#999"/><circle cx="27" cy="4" r=".6" fill="#aaa"/></svg>
<div class="abs pt" style="left:1129px;top:318px">m63_LRGB.tif</div>
<div class="abs" style="left:1069px;top:339px;width:191px;height:1px;background:#000"></div>
<div class="abs" style="left:1069px;top:342px;width:191px;height:2px;background:#000"></div>
<div class="abs" style="left:1092px;top:363px;width:168px;height:1px;background:#f6f4ea"></div>
<div class="abs" style="left:1072px;top:345px;width:18px;height:18px;border:1px solid #c8c5b4;border-right-color:#fff;border-bottom-color:#fff"></div>
<svg class="abs" style="left:1100px;top:345px" width="18" height="17"><path d="M1.500 1.500h8v2h4v11h-12z" fill="#fafaf6" stroke="#333"/><rect x="1.500" y="1.500" width="8" height="3" fill="#8c8c8c" stroke="#444"/><path d="M3.500 7.500h8M3.500 9.500h8M3.500 11.500h6" stroke="#333" stroke-width="1.200"/><path d="M11.500 9.500v6.500l5-3.250z" fill="#000"/></svg>
<div class="abs pt" style="left:1126px;top:346px;">Open</div>
<div class="abs" style="left:1092px;top:383px;width:168px;height:1px;background:#f6f4ea"></div>
<div class="abs" style="left:1072px;top:365px;width:18px;height:18px;border:1px solid #c8c5b4;border-right-color:#fff;border-bottom-color:#fff"></div>
<svg class="abs" style="left:1100px;top:365px" width="18" height="17"><path d="M1.500 1.500h8v2h4v11h-12z" fill="#fafaf6" stroke="#333"/><rect x="1.500" y="1.500" width="8" height="3" fill="#8c8c8c" stroke="#444"/><path d="M3.500 7.500h8M3.500 9.500h8M3.500 11.500h6" stroke="#333" stroke-width="1.200"/><path d="M11.500 9.500v6.500l5-3.250z" fill="#000"/></svg>
<div class="abs pt" style="left:1126px;top:366px;">Select Canvas</div>
<div class="abs" style="left:1092px;top:403px;width:168px;height:1px;background:#f6f4ea"></div>
<div class="abs" style="left:1072px;top:385px;width:18px;height:18px;border:1px solid #c8c5b4;border-right-color:#fff;border-bottom-color:#fff"></div>
<svg class="abs" style="left:1100px;top:385px" width="18" height="17"><path d="M1.500 1.500h8v2h4v11h-12z" fill="#fafaf6" stroke="#333"/><rect x="1.500" y="1.500" width="8" height="3" fill="#8c8c8c" stroke="#444"/><path d="M3.500 7.500h8M3.500 9.500h8M3.500 11.500h6" stroke="#333" stroke-width="1.200"/><path d="M11.500 9.500v6.500l5-3.250z" fill="#000"/></svg>
<div class="abs pt" style="left:1126px;top:386px;">Paste</div>
<div class="abs" style="left:1092px;top:423px;width:168px;height:1px;background:#f6f4ea"></div>
<div class="abs" style="left:1072px;top:405px;width:18px;height:18px;border:1px solid #c8c5b4;border-right-color:#fff;border-bottom-color:#fff"></div>
<svg class="abs" style="left:1100px;top:405px" width="18" height="17"><path d="M1.500 1.500h8v2h4v11h-12z" fill="#fafaf6" stroke="#333"/><rect x="1.500" y="1.500" width="8" height="3" fill="#8c8c8c" stroke="#444"/><path d="M3.500 7.500h8M3.500 9.500h8M3.500 11.500h6" stroke="#333" stroke-width="1.200"/><path d="M11.500 9.500v6.500l5-3.250z" fill="#000"/></svg>
<div class="abs pt" style="left:1126px;top:406px;">Add Layer Mask</div>
<div class="abs" style="left:1092px;top:443px;width:168px;height:1px;background:#f6f4ea"></div>
<div class="abs" style="left:1072px;top:425px;width:18px;height:18px;border:1px solid #c8c5b4;border-right-color:#fff;border-bottom-color:#fff"></div>
<svg class="abs" style="left:1100px;top:425px" width="18" height="17"><path d="M1.500 1.500h8v2h4v11h-12z" fill="#fafaf6" stroke="#333"/><rect x="1.500" y="1.500" width="8" height="3" fill="#8c8c8c" stroke="#444"/><path d="M3.500 7.500h8M3.500 9.500h8M3.500 11.500h6" stroke="#333" stroke-width="1.200"/><path d="M11.500 9.500v6.500l5-3.250z" fill="#000"/></svg>
<div class="abs pt" style="left:1126px;top:426px;">Paste</div>
<div class="abs" style="left:1092px;top:463px;width:168px;height:1px;background:#f6f4ea"></div>
<div class="abs" style="left:1072px;top:445px;width:18px;height:18px;border:1px solid #c8c5b4;border-right-color:#fff;border-bottom-color:#fff"></div>
<svg class="abs" style="left:1100px;top:445px" width="18" height="17"><path d="M1.500 1.500h8v2h4v11h-12z" fill="#fafaf6" stroke="#333"/><rect x="1.500" y="1.500" width="8" height="3" fill="#8c8c8c" stroke="#444"/><path d="M3.500 7.500h8M3.500 9.500h8M3.500 11.500h6" stroke="#333" stroke-width="1.200"/><path d="M11.500 9.500v6.500l5-3.250z" fill="#000"/></svg>
<div class="abs pt" style="left:1126px;top:446px;">Invert</div>
<div class="abs" style="left:1092px;top:483px;width:168px;height:1px;background:#f6f4ea"></div>
<div class="abs" style="left:1072px;top:465px;width:18px;height:18px;border:1px solid #c8c5b4;border-right-color:#fff;border-bottom-color:#fff"></div>
<svg class="abs" style="left:1100px;top:465px" width="18" height="17"><path d="M1.500 1.500h8v2h4v11h-12z" fill="#fafaf6" stroke="#333"/><rect x="1.500" y="1.500" width="8" height="3" fill="#8c8c8c" stroke="#444"/><path d="M3.500 7.500h8M3.500 9.500h8M3.500 11.500h6" stroke="#333" stroke-width="1.200"/><path d="M11.500 9.500v6.500l5-3.250z" fill="#000"/></svg>
<div class="abs pt" style="left:1126px;top:466px;">Levels</div>
<div class="abs" style="left:1092px;top:503px;width:168px;height:1px;background:#f6f4ea"></div>
<div class="abs" style="left:1072px;top:485px;width:18px;height:18px;border:1px solid #c8c5b4;border-right-color:#fff;border-bottom-color:#fff"></div>
<svg class="abs" style="left:1100px;top:485px" width="18" height="17"><path d="M1.500 1.500h8v2h4v11h-12z" fill="#fafaf6" stroke="#333"/><rect x="1.500" y="1.500" width="8" height="3" fill="#8c8c8c" stroke="#444"/><path d="M3.500 7.500h8M3.500 9.500h8M3.500 11.500h6" stroke="#333" stroke-width="1.200"/><path d="M11.500 9.500v6.500l5-3.250z" fill="#000"/></svg>
<div class="abs pt" style="left:1126px;top:486px;">Gaussian Blur</div>
<div class="abs" style="left:1092px;top:523px;width:168px;height:1px;background:#f6f4ea"></div>
<div class="abs" style="left:1072px;top:505px;width:18px;height:18px;border:1px solid #c8c5b4;border-right-color:#fff;border-bottom-color:#fff"></div>
<svg class="abs" style="left:1100px;top:505px" width="18" height="17"><path d="M1.500 1.500h8v2h4v11h-12z" fill="#fafaf6" stroke="#333"/><rect x="1.500" y="1.500" width="8" height="3" fill="#8c8c8c" stroke="#444"/><path d="M3.500 7.500h8M3.500 9.500h8M3.500 11.500h6" stroke="#333" stroke-width="1.200"/><path d="M11.500 9.500v6.500l5-3.250z" fill="#000"/></svg>
<div class="abs pt" style="left:1126px;top:506px;">Blending Change</div>
<div class="abs" style="left:1092px;top:543px;width:168px;height:1px;background:#f6f4ea"></div>
<div class="abs" style="left:1072px;top:525px;width:18px;height:18px;border:1px solid #c8c5b4;border-right-color:#fff;border-bottom-color:#fff"></div>
<svg class="abs" style="left:1100px;top:525px" width="18" height="17"><path d="M1.500 1.500h8v2h4v11h-12z" fill="#fafaf6" stroke="#333"/><rect x="1.500" y="1.500" width="8" height="3" fill="#8c8c8c" stroke="#444"/><path d="M3.500 7.500h8M3.500 9.500h8M3.500 11.500h6" stroke="#333" stroke-width="1.200"/><path d="M11.500 9.500v6.500l5-3.250z" fill="#000"/></svg>
<div class="abs pt" style="left:1126px;top:526px;">High Pass</div>
<div class="abs" style="left:1092px;top:544px;width:168px;height:19px;background:#316ac5"></div>
<div class="abs" style="left:1072px;top:545px;width:18px;height:18px;border:1px solid #c8c5b4;border-right-color:#fff;border-bottom-color:#fff"></div>
<svg class="abs" style="left:1100px;top:545px" width="18" height="17"><path d="M1.500 1.500h8v2h4v11h-12z" fill="#fafaf6" stroke="#333"/><rect x="1.500" y="1.500" width="8" height="3" fill="#8c8c8c" stroke="#444"/><path d="M3.500 7.500h8M3.500 9.500h8M3.500 11.500h6" stroke="#333" stroke-width="1.200"/><path d="M11.500 9.500v6.500l5-3.250z" fill="#000"/></svg>
<div class="abs pt" style="left:1126px;top:546px;font-weight:bold;color:#fff">Flatten Image</div>
<svg class="abs" style="left:1088px;top:548px" width="11" height="11"><path d="M.5 .500h5l4 4.500-4 4.500h-5z" fill="#fff" stroke="#333"/></svg>
<div class="abs" style="left:1069px;top:563px;width:191px;height:1px;background:#000"></div>
<div class="abs" style="left:1260px;top:312px;width:15px;height:289px;background:#fbfaf5"></div>
<div class="abs" style="left:1261px;top:314px;width:13px;height:13px;border:1px solid #e4e2d6;border-radius:2px;background:#f0eee4"></div>
<svg class="abs" style="left:1263px;top:317px" width="9" height="7"><path d="M1 5.500l3.500-3.500 3.500 3.500" fill="none" stroke="#d0cdc0" stroke-width="2"/></svg>
<div class="abs" style="left:1261px;top:586px;width:13px;height:13px;border:1px solid #e4e2d6;border-radius:2px;background:#f0eee4"></div>
<svg class="abs" style="left:1263px;top:589px" width="9" height="7"><path d="M1 1.500l3.500 3.500 3.500-3.500" fill="none" stroke="#d0cdc0" stroke-width="2"/></svg>
<div class="abs" style="left:1069px;top:601px;width:206px;height:1px;background:#000"></div>
<div class="abs" style="left:1260px;top:602px;width:1px;height:14px;background:#000"></div>
<svg class="abs" style="left:1182px;top:604px" width="12" height="11"><rect x=".5" y=".500" width="10" height="9" fill="#ddd" stroke="#444"/><rect x=".5" y=".500" width="10" height="2.500" fill="#777" stroke="#444"/><rect x="2.500" y="4.500" width="6" height="3.500" fill="#f4f4f4" stroke="#555" stroke-width=".7"/></svg>
<svg class="abs" style="left:1212px;top:604px" width="15" height="11"><rect x=".5" y="2.500" width="13" height="8" fill="#ddd" stroke="#444"/><rect x="8" y=".500" width="4" height="2" fill="#888" stroke="#444" stroke-width=".6"/><circle cx="7" cy="6.500" r="2.600" fill="#f8f8f8" stroke="#444"/></svg>
<svg class="abs" style="left:1242px;top:603px" width="11" height="12"><path d="M1.500 3.500h8l-1 8h-6z" fill="#ddd" stroke="#444"/><path d="M.5 3h10M4 1.500h3" stroke="#333" stroke-width="1.300"/><path d="M4 5v5M7 5v5" stroke="#555"/></svg>
<svg class="abs" style="left:1262px;top:603px" width="12" height="12"><path d="M11 3l-8 8M11 7l-4 4" stroke="#c8c5b4" stroke-width="1.500" stroke-dasharray="1.500 1.500"/></svg>
<div class="abs" style="left:1066px;top:619px;width:212px;height:253px;background:#0a2fc8"></div>
<div class="abs" style="left:1066px;top:619px;width:212px;height:17px;background:linear-gradient(#6486b8 0%,#4a78c4 10%,#5aa8ff 12%,#4a9cff 17%,#0a66f0 22%,#0056e2 45%,#005cf0 65%,#0068ff 86%,#0050d8 100%)"></div>
<div class="abs" style="left:1069px;top:636px;width:206px;height:233px;background:#ece9d8"></div>
<div class="abs" style="left:1069px;top:636px;width:206px;height:16px;background:linear-gradient(90deg,#ece9d8 0%,#e4e1d2 55%,#cfccc0 80%,#d8d5c8 100%)"></div>
<div class="btn" style="left:1246px;top:621px;width:13px;height:13px;border-radius:3px"><div class="abs" style="left:2px;top:7px;width:6px;height:2px;background:#fff"></div></div>
<div class="btn x" style="left:1262px;top:621px;width:13px;height:13px;border-radius:3px"><svg class="abs" style="left:1px;top:1px" width="9" height="9"><path d="M1.500 1.500l6 6M7.500 1.500l-6 6" stroke="#fff" stroke-width="1.800"/></svg></div>
<svg class="abs" style="left:1259px;top:637px" width="14" height="14"><circle cx="7" cy="7" r="6" fill="#f4f6fc" stroke="#c8d0e8"/><path d="M5.500 3.500v7l4-3.500z" fill="#1a3a9a"/></svg>
<svg class="abs" style="left:1066px;top:636px" width="212" height="17" viewBox="1066 636 212 17"><path d="M1178.5 651.5 L1178.5 638.5 L1219 638.5 L1231 651.5z" fill="#ece9d8" stroke="none"/><path d="M1178.5 651.5 L1178.5 638.5 L1219 638.5 L1231 651.5" fill="none" stroke="#000"/><path d="M1119.5 651.5 L1119.5 638.5 L1176 638.5 L1188 651.5z" fill="#ece9d8" stroke="none"/><path d="M1119.5 651.5 L1119.5 638.5 L1176 638.5 L1188 651.5" fill="none" stroke="#000"/><path d="M1073.5 651.5 L1073.5 638.5 L1117 638.5 L1129 651.5  L1129 653.0 L1073.5 653.0z" fill="#ece9d8" stroke="none"/><path d="M1073.5 651.5 L1073.5 638.5 L1117 638.5 L1129 651.5 " fill="none" stroke="#000"/><path d="M1069 651.5H1073.5M1129 651.5H1275" stroke="#000"/></svg>
<div class="abs pt" style="left:1080px;top:639px;font-weight:bold">Layers</div>
<div class="abs pt" style="left:1131px;top:639px;font-weight:normal">Channels</div>
<div class="abs pt" style="left:1191px;top:639px;font-weight:normal">Paths</div>
<div class="abs" style="left:1073px;top:656px;width:98px;height:17px;border:1px solid #c9c7ba;background:#fbfaf6"></div>
<div class="abs pt" style="left:1077px;top:659px;color:#aca899">Normal</div>
<div class="abs" style="left:1155px;top:657px;width:15px;height:15px;border:1px solid #dddacd;border-radius:2px;background:#efede2"></div><svg class="abs" style="left:1158px;top:662px" width="9" height="7"><path d="M1 1.500l3.500 3.500 3.500-3.500" fill="none" stroke="#c8c5b8" stroke-width="2"/></svg>
<div class="abs pt" style="left:1179px;top:659px;color:#aca899">Opacity:</div>
<div class="abs" style="left:1221px;top:656px;width:50px;height:17px;border:1px solid #c9c7ba;background:#f2f0e6"></div><div class="abs pt" style="left:1227px;top:659px;color:#aca899">100%</div><svg class="abs" style="left:1259px;top:660px" width="7" height="9"><path d="M1.500 1l3.500 3.500-3.500 3.500" fill="none" stroke="#d0cdc0" stroke-width="1.800"/></svg>
<div class="abs" style="left:1069px;top:677px;width:206px;height:1px;background:#aca899"></div><div class="abs" style="left:1069px;top:678px;width:206px;height:1px;background:#fff"></div>
<div class="abs pt" style="left:1073px;top:683px;color:#aca899">Lock:</div>
<svg class="abs" style="left:1106px;top:682px" width="70" height="14" viewBox="0 0 70 14"><rect x="1.500" y="1.500" width="10" height="10" fill="#f4f2ea" stroke="#999"/><path d="M2 2h3v3h-3zM8 2h3v3h-3zM5 5h3v3h-3zM2 8h3v3h-3zM8 8h3v3h-3z" fill="#c8c8c8"/><path d="M31 1l-6 7" stroke="#888" stroke-width="1.600"/><path d="M25 7.500c-2 1-3 2.500-4 5 2.500 0 4.500-1 5.500-3z" fill="#aaa" stroke="#777" stroke-width=".6"/><path d="M44.500 1.500v11M39 7h11" stroke="#777" stroke-width="1.200"/><path d="M44.500 0l2 2.500h-4zM44.500 14l2-2.500h-4zM37.500 7l2.500-2v4zM51.500 7l-2.500-2v4z" fill="#777"/><path d="M60.500 6v-2c0-3 5-3 5 0v2" fill="none" stroke="#999" stroke-width="1.300"/><rect x="58.500" y="6.500" width="9" height="6" fill="#a8a8a8" stroke="#888"/></svg>
<div class="abs pt" style="left:1202px;top:683px;color:#aca899">Fill:</div>
<div class="abs" style="left:1221px;top:680px;width:50px;height:17px;border:1px solid #c9c7ba;background:#f2f0e6"></div><div class="abs pt" style="left:1227px;top:683px;color:#aca899">100%</div><svg class="abs" style="left:1259px;top:684px" width="7" height="9"><path d="M1.500 1l3.500 3.500-3.500 3.500" fill="none" stroke="#d0cdc0" stroke-width="1.800"/></svg>
<div class="abs" style="left:1069px;top:701px;width:206px;height:1px;background:#000"></div>
<div class="abs" style="left:1113px;top:702px;width:147px;height:27px;background:#316ac5"></div>
<div class="abs" style="left:1069px;top:728px;width:191px;height:1px;background:#000"></div>
<div class="abs" style="left:1091px;top:702px;width:1px;height:26px;background:#aca899"></div><div class="abs" style="left:1112px;top:702px;width:1px;height:26px;background:#000"></div>
<div class="abs" style="left:1072px;top:706px;width:17px;height:17px;border:1px solid #c8c5b4;border-right-color:#fff;border-bottom-color:#fff;background:#f0eee2"></div>
<svg class="abs" style="left:1074px;top:710px" width="13" height="9"><path d="M.5 4.500c3-5 9-5 12 0-3 4.500-9 4.500-12 0z" fill="#fff" stroke="#222" stroke-width=".9"/><circle cx="6.500" cy="4.300" r="2.400" fill="#222"/><path d="M1 3c3-3.500 8-3.500 11 0" fill="none" stroke="#111" stroke-width="1.400"/></svg>
<div class="abs" style="left:1094px;top:706px;width:17px;height:17px;border:1px solid #c8c5b4;border-right-color:#fff;border-bottom-color:#fff;background:#f0eee2"></div>
<svg class="abs" style="left:1096px;top:708px" width="14" height="14"><path d="M12 1l-6 7" stroke="#444" stroke-width="1.600"/><path d="M6 7.500c-2 1-3 2.500-4.500 5.500 3 0 5-1 6-3z" fill="#777" stroke="#333" stroke-width=".6"/></svg>
<svg class="abs" style="left:1115px;top:704px" width="34" height="24" viewBox="0 0 34 24"><rect x=".5" y=".500" width="33" height="23" fill="#0c0e12" stroke="#b8d4ff"/><rect x="1.500" y="1.500" width="31" height="21" fill="none" stroke="#000"/><ellipse cx="17" cy="12" rx="12" ry="6" fill="url(#thg)" transform="rotate(-10 17 12)"/></svg>
<div class="abs pt" style="left:1152px;top:708px;color:#fff;font-style:italic">Background</div>
<svg class="abs" style="left:1248px;top:709px" width="10" height="12"><path d="M2.500 6v-2.500c0-3 5-3 5 0v2.500" fill="none" stroke="#fff" stroke-width="1.300"/><rect x="1" y="5.500" width="8" height="6" fill="#fff"/><rect x="2.500" y="7.500" width="5" height="2.500" fill="#222"/></svg>
<div class="abs" style="left:1260px;top:702px;width:15px;height:151px;background:#fbfaf5"></div>
<div class="abs" style="left:1261px;top:704px;width:13px;height:13px;border:1px solid #e4e2d6;border-radius:2px;background:#f0eee4"></div>
<svg class="abs" style="left:1263px;top:707px" width="9" height="7"><path d="M1 5.500l3.500-3.500 3.500 3.500" fill="none" stroke="#d0cdc0" stroke-width="2"/></svg>
<div class="abs" style="left:1261px;top:838px;width:13px;height:13px;border:1px solid #e4e2d6;border-radius:2px;background:#f0eee4"></div>
<svg class="abs" style="left:1263px;top:841px" width="9" height="7"><path d="M1 1.500l3.500 3.500 3.500-3.500" fill="none" stroke="#d0cdc0" stroke-width="2"/></svg>
<div class="abs" style="left:1069px;top:853px;width:206px;height:1px;background:#000"></div>
<div class="abs" style="left:1260px;top:854px;width:1px;height:15px;background:#000"></div>
<svg class="abs" style="left:1098px;top:855px" width="160" height="14" viewBox="0 0 160 14"><circle cx="7" cy="7" r="5.500" fill="#888" stroke="#555"/><path d="M9 3c-3 0-3 3-3.500 8M4.500 6.500h4" stroke="#fff" stroke-width="1.200" fill="none"/><path d="M12 11l2 2 1-2z" fill="#333"/><rect x="27.500" y="1.500" width="13" height="11" fill="#bbb" stroke="#555"/><circle cx="34" cy="7" r="3.500" fill="#fff" stroke="#666"/><path d="M56.500 3.500h4l1.500 1.500h6v7h-11.500z" fill="#ddd" stroke="#444"/><circle cx="90" cy="7" r="5.500" fill="#fff" stroke="#333"/><path d="M86 11a5.500 5.500 0 0 0 8-8z" fill="#333"/><path d="M95 11l2.500 2 1-2.500z" fill="#222"/><rect x="116.500" y="3.500" width="8" height="8" fill="#f4f4f4" stroke="#444"/><rect x="119" y="7" width="4" height="3" fill="#333"/><path d="M145.500 4.500h8l-1 8h-6z" fill="#ddd" stroke="#444"/><path d="M144.500 4h10M148 2.500h3" stroke="#333" stroke-width="1.300"/><path d="M148 6v5M151 6v5" stroke="#555"/></svg>
<svg class="abs" style="left:1262px;top:856px" width="12" height="12"><path d="M11 3l-8 8M11 7l-4 4" stroke="#c8c5b4" stroke-width="1.500" stroke-dasharray="1.500 1.500"/></svg>
</body></html>
